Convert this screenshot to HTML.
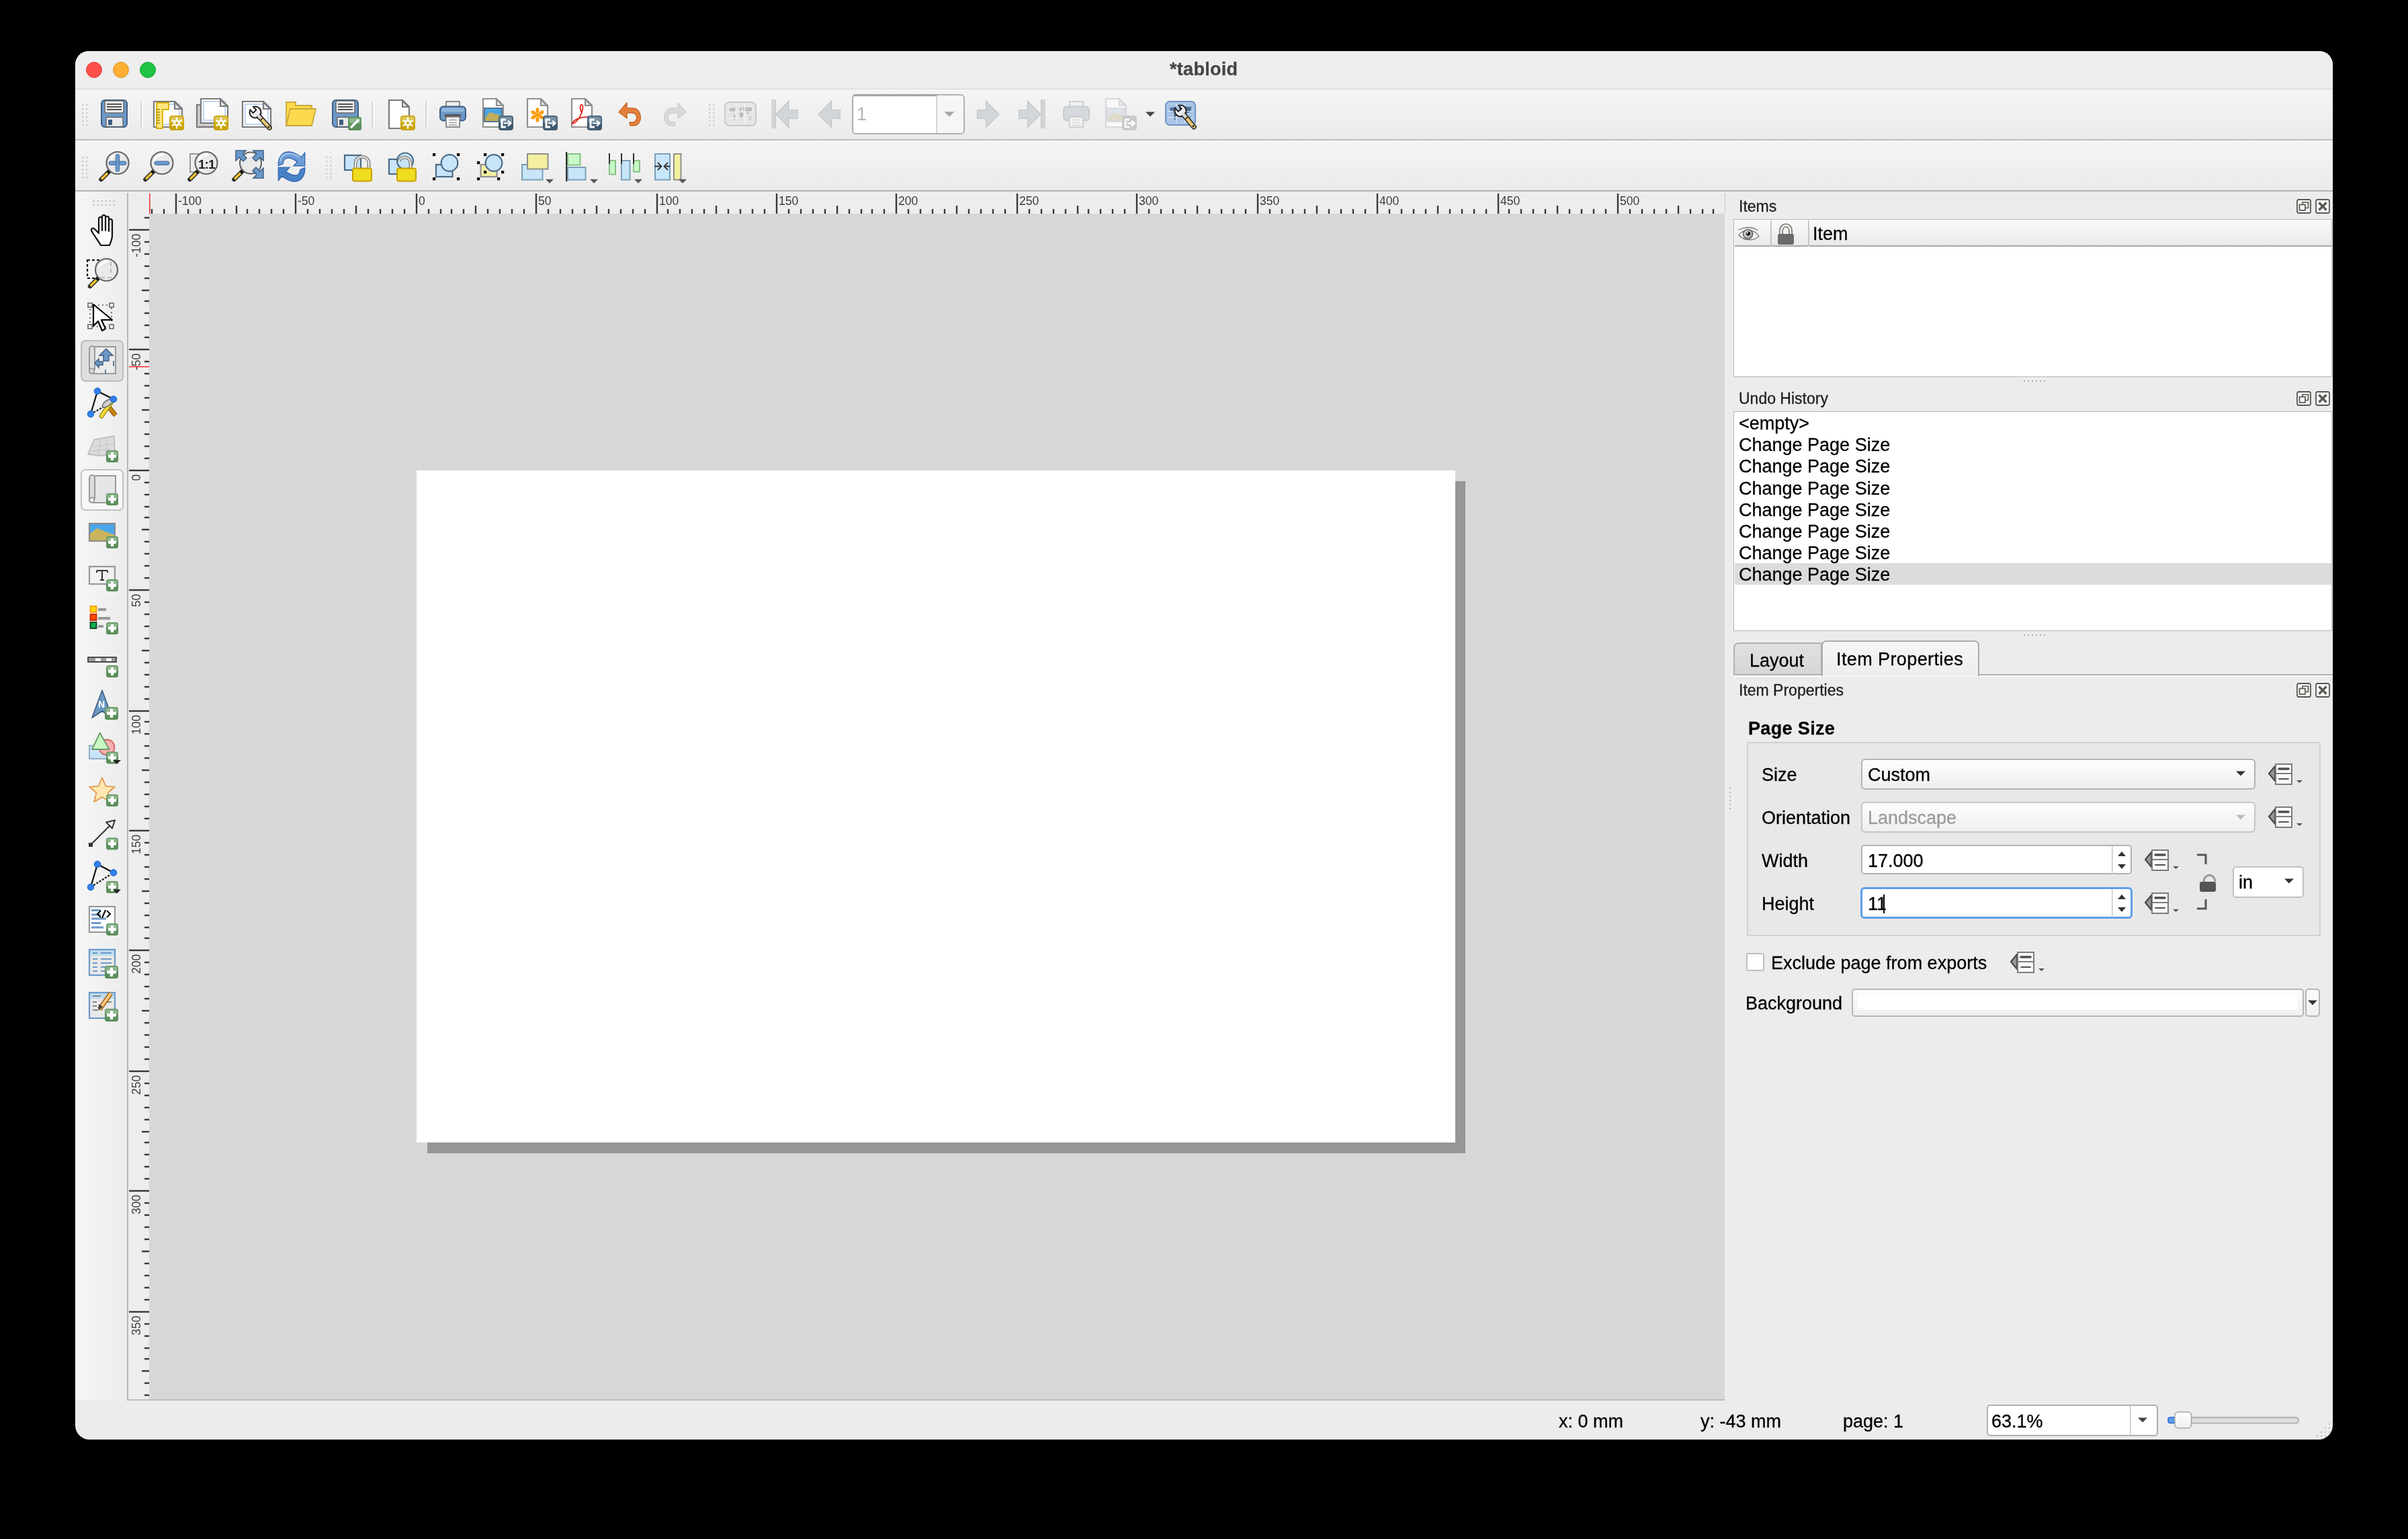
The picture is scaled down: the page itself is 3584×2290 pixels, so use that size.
<!DOCTYPE html>
<html><head><meta charset="utf-8">
<style>
*{margin:0;padding:0;box-sizing:border-box}
html,body{width:3584px;height:2290px;background:#000;overflow:hidden;font-family:"Liberation Sans",sans-serif;color:#000;-webkit-font-smoothing:antialiased}
.abs{}
.abs{position:absolute;white-space:nowrap;-webkit-text-stroke:0.3px currentColor}
svg text{font-family:"Liberation Sans",sans-serif}
</style></head><body><div id="root" style="position:absolute;left:0;top:0;width:3584px;height:2290px;will-change:transform">
<div class="abs" style="left:112px;top:76px;width:3360px;height:2066px;border-radius:21px;background:#ececec"></div>
<div class="abs" style="left:112px;top:76px;width:3360px;height:56px;background:#eeeeee;border-radius:20px 20px 0 0"></div>
<div class="abs" style="left:128px;top:92px;width:24px;height:24px;border-radius:50%;background:#fe4f4b;border:1px solid #e23f3a"></div>
<div class="abs" style="left:168px;top:92px;width:24px;height:24px;border-radius:50%;background:#feae32;border:1px solid #dd9428"></div>
<div class="abs" style="left:208px;top:92px;width:24px;height:24px;border-radius:50%;background:#1fc444;border:1px solid #18a737"></div>
<div class="abs" style="left:1741px;top:90px;font-size:27px;line-height:27px;color:#454545;font-weight:bold;letter-spacing:0.3px">*tabloid</div>
<div class="abs" style="left:112px;top:132px;width:3360px;height:1px;background:#d4d4d4"></div>
<div class="abs" style="left:112px;top:133px;width:3360px;height:74px;background:linear-gradient(#f5f5f5,#ebebeb)"></div>
<div class="abs" style="left:112px;top:207px;width:3360px;height:2px;background:#bebebe"></div>
<div class="abs" style="left:112px;top:209px;width:3360px;height:74px;background:linear-gradient(#f5f5f5,#ebebeb)"></div>
<div class="abs" style="left:112px;top:283px;width:3360px;height:2px;background:#b2b2b2"></div>
<div class="abs" style="left:112px;top:285px;width:78px;height:1799px;background:linear-gradient(90deg,#f6f6f6,#ececec)"></div>
<div class="abs" style="left:189px;top:287px;width:2px;height:1797px;background:#b8b8b8"></div>
<div class="abs" style="left:191px;top:285px;width:2377px;height:33px;background:#ededed"></div>
<div class="abs" style="left:191px;top:318px;width:31px;height:1764px;background:#ededed"></div>
<svg class="abs" style="left:190px;top:284px" width="2378" height="34"><rect x="34.80" y="27" width="2.4" height="7" fill="#383838"/><rect x="52.80" y="27" width="2.4" height="7" fill="#383838"/><rect x="70.80" y="4" width="2.4" height="30" fill="#383838"/><text x="75.0" y="21" font-size="17.5" fill="#3c3c3c">-100</text><rect x="88.80" y="27" width="2.4" height="7" fill="#383838"/><rect x="106.80" y="27" width="2.4" height="7" fill="#383838"/><rect x="124.80" y="27" width="2.4" height="7" fill="#383838"/><rect x="142.80" y="27" width="2.4" height="7" fill="#383838"/><rect x="160.80" y="22" width="2.4" height="12" fill="#383838"/><rect x="176.80" y="27" width="2.4" height="7" fill="#383838"/><rect x="194.80" y="27" width="2.4" height="7" fill="#383838"/><rect x="212.80" y="27" width="2.4" height="7" fill="#383838"/><rect x="230.80" y="27" width="2.4" height="7" fill="#383838"/><rect x="248.80" y="4" width="2.4" height="30" fill="#383838"/><text x="253.0" y="21" font-size="17.5" fill="#3c3c3c">-50</text><rect x="266.80" y="27" width="2.4" height="7" fill="#383838"/><rect x="284.80" y="27" width="2.4" height="7" fill="#383838"/><rect x="302.80" y="27" width="2.4" height="7" fill="#383838"/><rect x="320.80" y="27" width="2.4" height="7" fill="#383838"/><rect x="338.80" y="22" width="2.4" height="12" fill="#383838"/><rect x="356.80" y="27" width="2.4" height="7" fill="#383838"/><rect x="374.80" y="27" width="2.4" height="7" fill="#383838"/><rect x="392.80" y="27" width="2.4" height="7" fill="#383838"/><rect x="410.80" y="27" width="2.4" height="7" fill="#383838"/><rect x="428.80" y="4" width="2.4" height="30" fill="#383838"/><text x="433.0" y="21" font-size="17.5" fill="#3c3c3c">0</text><rect x="446.80" y="27" width="2.4" height="7" fill="#383838"/><rect x="464.80" y="27" width="2.4" height="7" fill="#383838"/><rect x="480.80" y="27" width="2.4" height="7" fill="#383838"/><rect x="498.80" y="27" width="2.4" height="7" fill="#383838"/><rect x="516.80" y="22" width="2.4" height="12" fill="#383838"/><rect x="534.80" y="27" width="2.4" height="7" fill="#383838"/><rect x="552.80" y="27" width="2.4" height="7" fill="#383838"/><rect x="570.80" y="27" width="2.4" height="7" fill="#383838"/><rect x="588.80" y="27" width="2.4" height="7" fill="#383838"/><rect x="606.80" y="4" width="2.4" height="30" fill="#383838"/><text x="611.0" y="21" font-size="17.5" fill="#3c3c3c">50</text><rect x="624.80" y="27" width="2.4" height="7" fill="#383838"/><rect x="642.80" y="27" width="2.4" height="7" fill="#383838"/><rect x="660.80" y="27" width="2.4" height="7" fill="#383838"/><rect x="678.80" y="27" width="2.4" height="7" fill="#383838"/><rect x="696.80" y="22" width="2.4" height="12" fill="#383838"/><rect x="714.80" y="27" width="2.4" height="7" fill="#383838"/><rect x="732.80" y="27" width="2.4" height="7" fill="#383838"/><rect x="750.80" y="27" width="2.4" height="7" fill="#383838"/><rect x="768.80" y="27" width="2.4" height="7" fill="#383838"/><rect x="786.80" y="4" width="2.4" height="30" fill="#383838"/><text x="791.0" y="21" font-size="17.5" fill="#3c3c3c">100</text><rect x="802.80" y="27" width="2.4" height="7" fill="#383838"/><rect x="820.80" y="27" width="2.4" height="7" fill="#383838"/><rect x="838.80" y="27" width="2.4" height="7" fill="#383838"/><rect x="856.80" y="27" width="2.4" height="7" fill="#383838"/><rect x="874.80" y="22" width="2.4" height="12" fill="#383838"/><rect x="892.80" y="27" width="2.4" height="7" fill="#383838"/><rect x="910.80" y="27" width="2.4" height="7" fill="#383838"/><rect x="928.80" y="27" width="2.4" height="7" fill="#383838"/><rect x="946.80" y="27" width="2.4" height="7" fill="#383838"/><rect x="964.80" y="4" width="2.4" height="30" fill="#383838"/><text x="969.0" y="21" font-size="17.5" fill="#3c3c3c">150</text><rect x="982.80" y="27" width="2.4" height="7" fill="#383838"/><rect x="1000.80" y="27" width="2.4" height="7" fill="#383838"/><rect x="1018.80" y="27" width="2.4" height="7" fill="#383838"/><rect x="1036.80" y="27" width="2.4" height="7" fill="#383838"/><rect x="1054.80" y="22" width="2.4" height="12" fill="#383838"/><rect x="1072.80" y="27" width="2.4" height="7" fill="#383838"/><rect x="1090.80" y="27" width="2.4" height="7" fill="#383838"/><rect x="1106.80" y="27" width="2.4" height="7" fill="#383838"/><rect x="1124.80" y="27" width="2.4" height="7" fill="#383838"/><rect x="1142.80" y="4" width="2.4" height="30" fill="#383838"/><text x="1147.0" y="21" font-size="17.5" fill="#3c3c3c">200</text><rect x="1160.80" y="27" width="2.4" height="7" fill="#383838"/><rect x="1178.80" y="27" width="2.4" height="7" fill="#383838"/><rect x="1196.80" y="27" width="2.4" height="7" fill="#383838"/><rect x="1214.80" y="27" width="2.4" height="7" fill="#383838"/><rect x="1232.80" y="22" width="2.4" height="12" fill="#383838"/><rect x="1250.80" y="27" width="2.4" height="7" fill="#383838"/><rect x="1268.80" y="27" width="2.4" height="7" fill="#383838"/><rect x="1286.80" y="27" width="2.4" height="7" fill="#383838"/><rect x="1304.80" y="27" width="2.4" height="7" fill="#383838"/><rect x="1322.80" y="4" width="2.4" height="30" fill="#383838"/><text x="1327.0" y="21" font-size="17.5" fill="#3c3c3c">250</text><rect x="1340.80" y="27" width="2.4" height="7" fill="#383838"/><rect x="1358.80" y="27" width="2.4" height="7" fill="#383838"/><rect x="1376.80" y="27" width="2.4" height="7" fill="#383838"/><rect x="1394.80" y="27" width="2.4" height="7" fill="#383838"/><rect x="1412.80" y="22" width="2.4" height="12" fill="#383838"/><rect x="1428.80" y="27" width="2.4" height="7" fill="#383838"/><rect x="1446.80" y="27" width="2.4" height="7" fill="#383838"/><rect x="1464.80" y="27" width="2.4" height="7" fill="#383838"/><rect x="1482.80" y="27" width="2.4" height="7" fill="#383838"/><rect x="1500.80" y="4" width="2.4" height="30" fill="#383838"/><text x="1505.0" y="21" font-size="17.5" fill="#3c3c3c">300</text><rect x="1518.80" y="27" width="2.4" height="7" fill="#383838"/><rect x="1536.80" y="27" width="2.4" height="7" fill="#383838"/><rect x="1554.80" y="27" width="2.4" height="7" fill="#383838"/><rect x="1572.80" y="27" width="2.4" height="7" fill="#383838"/><rect x="1590.80" y="22" width="2.4" height="12" fill="#383838"/><rect x="1608.80" y="27" width="2.4" height="7" fill="#383838"/><rect x="1626.80" y="27" width="2.4" height="7" fill="#383838"/><rect x="1644.80" y="27" width="2.4" height="7" fill="#383838"/><rect x="1662.80" y="27" width="2.4" height="7" fill="#383838"/><rect x="1680.80" y="4" width="2.4" height="30" fill="#383838"/><text x="1685.0" y="21" font-size="17.5" fill="#3c3c3c">350</text><rect x="1698.80" y="27" width="2.4" height="7" fill="#383838"/><rect x="1716.80" y="27" width="2.4" height="7" fill="#383838"/><rect x="1732.80" y="27" width="2.4" height="7" fill="#383838"/><rect x="1750.80" y="27" width="2.4" height="7" fill="#383838"/><rect x="1768.80" y="22" width="2.4" height="12" fill="#383838"/><rect x="1786.80" y="27" width="2.4" height="7" fill="#383838"/><rect x="1804.80" y="27" width="2.4" height="7" fill="#383838"/><rect x="1822.80" y="27" width="2.4" height="7" fill="#383838"/><rect x="1840.80" y="27" width="2.4" height="7" fill="#383838"/><rect x="1858.80" y="4" width="2.4" height="30" fill="#383838"/><text x="1863.0" y="21" font-size="17.5" fill="#3c3c3c">400</text><rect x="1876.80" y="27" width="2.4" height="7" fill="#383838"/><rect x="1894.80" y="27" width="2.4" height="7" fill="#383838"/><rect x="1912.80" y="27" width="2.4" height="7" fill="#383838"/><rect x="1930.80" y="27" width="2.4" height="7" fill="#383838"/><rect x="1948.80" y="22" width="2.4" height="12" fill="#383838"/><rect x="1966.80" y="27" width="2.4" height="7" fill="#383838"/><rect x="1984.80" y="27" width="2.4" height="7" fill="#383838"/><rect x="2002.80" y="27" width="2.4" height="7" fill="#383838"/><rect x="2020.80" y="27" width="2.4" height="7" fill="#383838"/><rect x="2038.80" y="4" width="2.4" height="30" fill="#383838"/><text x="2043.0" y="21" font-size="17.5" fill="#3c3c3c">450</text><rect x="2054.80" y="27" width="2.4" height="7" fill="#383838"/><rect x="2072.80" y="27" width="2.4" height="7" fill="#383838"/><rect x="2090.80" y="27" width="2.4" height="7" fill="#383838"/><rect x="2108.80" y="27" width="2.4" height="7" fill="#383838"/><rect x="2126.80" y="22" width="2.4" height="12" fill="#383838"/><rect x="2144.80" y="27" width="2.4" height="7" fill="#383838"/><rect x="2162.80" y="27" width="2.4" height="7" fill="#383838"/><rect x="2180.80" y="27" width="2.4" height="7" fill="#383838"/><rect x="2198.80" y="27" width="2.4" height="7" fill="#383838"/><rect x="2216.80" y="4" width="2.4" height="30" fill="#383838"/><text x="2221.0" y="21" font-size="17.5" fill="#3c3c3c">500</text><rect x="2234.80" y="27" width="2.4" height="7" fill="#383838"/><rect x="2252.80" y="27" width="2.4" height="7" fill="#383838"/><rect x="2270.80" y="27" width="2.4" height="7" fill="#383838"/><rect x="2288.80" y="27" width="2.4" height="7" fill="#383838"/><rect x="2306.80" y="22" width="2.4" height="12" fill="#383838"/><rect x="2324.80" y="27" width="2.4" height="7" fill="#383838"/><rect x="2342.80" y="27" width="2.4" height="7" fill="#383838"/><rect x="2358.80" y="27" width="2.4" height="7" fill="#383838"/><rect x="32.19999999999999" y="4" width="1.3" height="30" fill="#ff1010"/></svg>
<svg class="abs" style="left:190px;top:318px" width="32" height="1764"><rect x="25" y="4.80" width="7" height="2.4" fill="#383838"/><rect x="2" y="22.80" width="30" height="2.4" fill="#383838"/><text transform="translate(19.3 29.7) rotate(-90)" text-anchor="end" font-size="17.5" fill="#3c3c3c">-100</text><rect x="25" y="40.80" width="7" height="2.4" fill="#383838"/><rect x="25" y="58.80" width="7" height="2.4" fill="#383838"/><rect x="25" y="76.80" width="7" height="2.4" fill="#383838"/><rect x="25" y="94.80" width="7" height="2.4" fill="#383838"/><rect x="21" y="112.80" width="11" height="2.4" fill="#383838"/><rect x="25" y="128.80" width="7" height="2.4" fill="#383838"/><rect x="25" y="146.80" width="7" height="2.4" fill="#383838"/><rect x="25" y="164.80" width="7" height="2.4" fill="#383838"/><rect x="25" y="182.80" width="7" height="2.4" fill="#383838"/><rect x="2" y="200.80" width="30" height="2.4" fill="#383838"/><text transform="translate(19.3 207.7) rotate(-90)" text-anchor="end" font-size="17.5" fill="#3c3c3c">-50</text><rect x="25" y="218.80" width="7" height="2.4" fill="#383838"/><rect x="25" y="236.80" width="7" height="2.4" fill="#383838"/><rect x="25" y="254.80" width="7" height="2.4" fill="#383838"/><rect x="25" y="272.80" width="7" height="2.4" fill="#383838"/><rect x="21" y="290.80" width="11" height="2.4" fill="#383838"/><rect x="25" y="308.80" width="7" height="2.4" fill="#383838"/><rect x="25" y="326.80" width="7" height="2.4" fill="#383838"/><rect x="25" y="344.80" width="7" height="2.4" fill="#383838"/><rect x="25" y="362.80" width="7" height="2.4" fill="#383838"/><rect x="2" y="380.80" width="30" height="2.4" fill="#383838"/><text transform="translate(19.3 387.7) rotate(-90)" text-anchor="end" font-size="17.5" fill="#3c3c3c">0</text><rect x="25" y="398.80" width="7" height="2.4" fill="#383838"/><rect x="25" y="416.80" width="7" height="2.4" fill="#383838"/><rect x="25" y="434.80" width="7" height="2.4" fill="#383838"/><rect x="25" y="450.80" width="7" height="2.4" fill="#383838"/><rect x="21" y="468.80" width="11" height="2.4" fill="#383838"/><rect x="25" y="486.80" width="7" height="2.4" fill="#383838"/><rect x="25" y="504.80" width="7" height="2.4" fill="#383838"/><rect x="25" y="522.80" width="7" height="2.4" fill="#383838"/><rect x="25" y="540.80" width="7" height="2.4" fill="#383838"/><rect x="2" y="558.80" width="30" height="2.4" fill="#383838"/><text transform="translate(19.3 565.7) rotate(-90)" text-anchor="end" font-size="17.5" fill="#3c3c3c">50</text><rect x="25" y="576.80" width="7" height="2.4" fill="#383838"/><rect x="25" y="594.80" width="7" height="2.4" fill="#383838"/><rect x="25" y="612.80" width="7" height="2.4" fill="#383838"/><rect x="25" y="630.80" width="7" height="2.4" fill="#383838"/><rect x="21" y="648.80" width="11" height="2.4" fill="#383838"/><rect x="25" y="666.80" width="7" height="2.4" fill="#383838"/><rect x="25" y="684.80" width="7" height="2.4" fill="#383838"/><rect x="25" y="702.80" width="7" height="2.4" fill="#383838"/><rect x="25" y="720.80" width="7" height="2.4" fill="#383838"/><rect x="2" y="738.80" width="30" height="2.4" fill="#383838"/><text transform="translate(19.3 745.7) rotate(-90)" text-anchor="end" font-size="17.5" fill="#3c3c3c">100</text><rect x="25" y="754.80" width="7" height="2.4" fill="#383838"/><rect x="25" y="772.80" width="7" height="2.4" fill="#383838"/><rect x="25" y="790.80" width="7" height="2.4" fill="#383838"/><rect x="25" y="808.80" width="7" height="2.4" fill="#383838"/><rect x="21" y="826.80" width="11" height="2.4" fill="#383838"/><rect x="25" y="844.80" width="7" height="2.4" fill="#383838"/><rect x="25" y="862.80" width="7" height="2.4" fill="#383838"/><rect x="25" y="880.80" width="7" height="2.4" fill="#383838"/><rect x="25" y="898.80" width="7" height="2.4" fill="#383838"/><rect x="2" y="916.80" width="30" height="2.4" fill="#383838"/><text transform="translate(19.3 923.7) rotate(-90)" text-anchor="end" font-size="17.5" fill="#3c3c3c">150</text><rect x="25" y="934.80" width="7" height="2.4" fill="#383838"/><rect x="25" y="952.80" width="7" height="2.4" fill="#383838"/><rect x="25" y="970.80" width="7" height="2.4" fill="#383838"/><rect x="25" y="988.80" width="7" height="2.4" fill="#383838"/><rect x="21" y="1006.80" width="11" height="2.4" fill="#383838"/><rect x="25" y="1024.80" width="7" height="2.4" fill="#383838"/><rect x="25" y="1042.80" width="7" height="2.4" fill="#383838"/><rect x="25" y="1060.80" width="7" height="2.4" fill="#383838"/><rect x="25" y="1076.80" width="7" height="2.4" fill="#383838"/><rect x="2" y="1094.80" width="30" height="2.4" fill="#383838"/><text transform="translate(19.3 1101.7) rotate(-90)" text-anchor="end" font-size="17.5" fill="#3c3c3c">200</text><rect x="25" y="1112.80" width="7" height="2.4" fill="#383838"/><rect x="25" y="1130.80" width="7" height="2.4" fill="#383838"/><rect x="25" y="1148.80" width="7" height="2.4" fill="#383838"/><rect x="25" y="1166.80" width="7" height="2.4" fill="#383838"/><rect x="21" y="1184.80" width="11" height="2.4" fill="#383838"/><rect x="25" y="1202.80" width="7" height="2.4" fill="#383838"/><rect x="25" y="1220.80" width="7" height="2.4" fill="#383838"/><rect x="25" y="1238.80" width="7" height="2.4" fill="#383838"/><rect x="25" y="1256.80" width="7" height="2.4" fill="#383838"/><rect x="2" y="1274.80" width="30" height="2.4" fill="#383838"/><text transform="translate(19.3 1281.7) rotate(-90)" text-anchor="end" font-size="17.5" fill="#3c3c3c">250</text><rect x="25" y="1292.80" width="7" height="2.4" fill="#383838"/><rect x="25" y="1310.80" width="7" height="2.4" fill="#383838"/><rect x="25" y="1328.80" width="7" height="2.4" fill="#383838"/><rect x="25" y="1346.80" width="7" height="2.4" fill="#383838"/><rect x="21" y="1364.80" width="11" height="2.4" fill="#383838"/><rect x="25" y="1380.80" width="7" height="2.4" fill="#383838"/><rect x="25" y="1398.80" width="7" height="2.4" fill="#383838"/><rect x="25" y="1416.80" width="7" height="2.4" fill="#383838"/><rect x="25" y="1434.80" width="7" height="2.4" fill="#383838"/><rect x="2" y="1452.80" width="30" height="2.4" fill="#383838"/><text transform="translate(19.3 1459.7) rotate(-90)" text-anchor="end" font-size="17.5" fill="#3c3c3c">300</text><rect x="25" y="1470.80" width="7" height="2.4" fill="#383838"/><rect x="25" y="1488.80" width="7" height="2.4" fill="#383838"/><rect x="25" y="1506.80" width="7" height="2.4" fill="#383838"/><rect x="25" y="1524.80" width="7" height="2.4" fill="#383838"/><rect x="21" y="1542.80" width="11" height="2.4" fill="#383838"/><rect x="25" y="1560.80" width="7" height="2.4" fill="#383838"/><rect x="25" y="1578.80" width="7" height="2.4" fill="#383838"/><rect x="25" y="1596.80" width="7" height="2.4" fill="#383838"/><rect x="25" y="1614.80" width="7" height="2.4" fill="#383838"/><rect x="2" y="1632.80" width="30" height="2.4" fill="#383838"/><text transform="translate(19.3 1639.7) rotate(-90)" text-anchor="end" font-size="17.5" fill="#3c3c3c">350</text><rect x="25" y="1650.80" width="7" height="2.4" fill="#383838"/><rect x="25" y="1668.80" width="7" height="2.4" fill="#383838"/><rect x="25" y="1686.80" width="7" height="2.4" fill="#383838"/><rect x="25" y="1702.80" width="7" height="2.4" fill="#383838"/><rect x="21" y="1720.80" width="11" height="2.4" fill="#383838"/><rect x="25" y="1738.80" width="7" height="2.4" fill="#383838"/><rect x="25" y="1756.80" width="7" height="2.4" fill="#383838"/><rect x="2" y="227.00000000000003" width="30" height="1.3" fill="#ff1010"/></svg>
<div class="abs" style="left:222px;top:318px;width:2345px;height:1764px;background:#d7d7d7"></div>
<div class="abs" style="left:191px;top:2082px;width:2377px;height:2px;background:#bdbdbd"></div>
<div class="abs" style="left:2567px;top:287px;width:1px;height:31px;background:#c8c8c8"></div>
<div class="abs" style="left:636px;top:716px;width:1545px;height:1000px;background:#969696"></div>
<div class="abs" style="left:620px;top:700px;width:1546px;height:1000px;background:#fff"></div>

<div class="abs" style="left:2588px;top:296px;font-size:23px;line-height:23px;color:#1e1e1e;">Items</div>
<div class="abs" style="left:2580px;top:326px;width:891px;height:235px;background:#fff;border:1.5px solid #b6b6b6"></div>
<div class="abs" style="left:2581.5px;top:327.5px;width:888px;height:39.5px;background:linear-gradient(#fafafa,#e9e9e9);border-bottom:2px solid #a6a6a6"></div>
<div class="abs" style="left:2635px;top:328px;width:2px;height:39px;background:#c6c6c6"></div>
<div class="abs" style="left:2691px;top:328px;width:2px;height:39px;background:#c6c6c6"></div>
<div class="abs" style="left:2698px;top:335px;font-size:27px;line-height:27px;">Item</div>

<div class="abs" style="left:2588px;top:582px;font-size:23px;line-height:23px;color:#1e1e1e;">Undo History</div>
<div class="abs" style="left:2580px;top:612px;width:891px;height:327px;background:#fff;border:1.5px solid #b6b6b6"></div>
<div class="abs" style="left:2581.5px;top:838px;width:888px;height:32px;background:#dcdcdc"></div>
<div class="abs" style="left:2588px;top:617.0px;font-size:27px;line-height:27px;">&lt;empty&gt;</div><div class="abs" style="left:2588px;top:649.2px;font-size:27px;line-height:27px;">Change Page Size</div><div class="abs" style="left:2588px;top:681.4px;font-size:27px;line-height:27px;">Change Page Size</div><div class="abs" style="left:2588px;top:713.6px;font-size:27px;line-height:27px;">Change Page Size</div><div class="abs" style="left:2588px;top:745.8px;font-size:27px;line-height:27px;">Change Page Size</div><div class="abs" style="left:2588px;top:778.0px;font-size:27px;line-height:27px;">Change Page Size</div><div class="abs" style="left:2588px;top:810.2px;font-size:27px;line-height:27px;">Change Page Size</div><div class="abs" style="left:2588px;top:842.4000000000001px;font-size:27px;line-height:27px;">Change Page Size</div>

<div class="abs" style="left:2580px;top:1005px;width:892px;height:2px;background:#fdfdfd"></div>
<div class="abs" style="left:2580px;top:956px;width:132px;height:49px;background:linear-gradient(#e0e0e0,#d6d6d6);border:2px solid #b0b0b0;border-bottom:none;border-radius:8px 0 0 0"></div>
<div class="abs" style="left:2580px;top:1003px;width:892px;height:2px;background:#b0b0b0"></div>
<div class="abs" style="left:2711px;top:952.5px;width:235px;height:53.5px;background:linear-gradient(#f6f6f6,#ededed);border:2px solid #acacac;border-bottom:none;border-radius:7px 7px 0 0"></div>
<div class="abs" style="left:2604px;top:970px;font-size:27px;line-height:27px;">Layout</div>
<div class="abs" style="left:2733px;top:968px;font-size:27px;line-height:27px;letter-spacing:0.4px">Item Properties</div>
<div class="abs" style="left:2588px;top:1016px;font-size:23px;line-height:23px;color:#1e1e1e;">Item Properties</div>
<div class="abs" style="left:2602px;top:1071px;font-size:27px;line-height:27px;font-weight:bold;letter-spacing:0.35px">Page Size</div>
<div class="abs" style="left:2600px;top:1104px;width:854px;height:289px;background:#e8e8e8;border:2px solid #d0d0d0;border-radius:2px"></div>
<div class="abs" style="left:2622px;top:1140px;font-size:27px;line-height:27px;">Size</div>
<div class="abs" style="left:2622px;top:1204px;font-size:27px;line-height:27px;">Orientation</div>
<div class="abs" style="left:2622px;top:1268px;font-size:27px;line-height:27px;">Width</div>
<div class="abs" style="left:2622px;top:1332px;font-size:27px;line-height:27px;">Height</div>
<div class="abs" style="left:2770px;top:1129px;width:587px;height:46px;background:linear-gradient(#fdfdfd,#efefef);border:2px solid #b2b2b2;border-radius:6px"></div>
<div class="abs" style="left:2780px;top:1140px;font-size:27px;line-height:27px;">Custom</div>
<div class="abs" style="left:2770px;top:1193px;width:587px;height:46px;background:linear-gradient(#fdfdfd,#efefef);border:2px solid #c6c6c6;border-radius:6px"></div>
<div class="abs" style="left:2780px;top:1204px;font-size:27px;line-height:27px;color:#9c9c9c;">Landscape</div>
<div class="abs" style="left:2770px;top:1257px;width:403px;height:44px;background:#fff;border:2px solid #b2b2b2;border-radius:5px"></div>
<div class="abs" style="left:2780px;top:1268px;font-size:27px;line-height:27px;">17.000</div>
<div class="abs" style="left:2769px;top:1320px;width:405px;height:47px;background:#fff;border:3px solid #5d9fe9;border-radius:6px"></div>
<div class="abs" style="left:2780px;top:1332px;font-size:27px;line-height:27px;">11</div>
<div class="abs" style="left:2803px;top:1331px;width:2px;height:28px;background:#000"></div>
<div class="abs" style="left:3323px;top:1289px;width:106px;height:47px;background:#fff;border:2px solid #c2c2c2;border-radius:5px"></div>
<div class="abs" style="left:3332px;top:1300px;font-size:27px;line-height:27px;">in</div>

<div class="abs" style="left:2599px;top:1418px;width:27px;height:27px;background:#fff;border:2px solid #bebebe;border-radius:3px"></div>
<div class="abs" style="left:2636px;top:1420px;font-size:27px;line-height:27px;">Exclude page from exports</div>
<div class="abs" style="left:2598px;top:1480px;font-size:27px;line-height:27px;">Background</div>
<div class="abs" style="left:2756px;top:1471px;width:673px;height:42px;background:linear-gradient(#fdfdfd,#efefef);border:2px solid #b6b6b6;border-radius:5px"></div>
<div class="abs" style="left:2765px;top:1482px;width:655px;height:20px;background:#fff"></div>
<div class="abs" style="left:3431px;top:1471px;width:22px;height:42px;background:linear-gradient(#fdfdfd,#efefef);border:2px solid #b6b6b6;border-radius:5px"></div>

<div class="abs" style="left:2320px;top:2102px;font-size:27px;line-height:27px;">x: 0 mm</div>
<div class="abs" style="left:2531px;top:2102px;font-size:27px;line-height:27px;">y: -43 mm</div>
<div class="abs" style="left:2743px;top:2102px;font-size:27px;line-height:27px;">page: 1</div>
<div class="abs" style="left:2957px;top:2090px;width:255px;height:47px;background:#fff;border:2px solid #b0b0b0;border-radius:5px"></div>
<div class="abs" style="left:2964px;top:2102px;font-size:27px;line-height:27px;">63.1%</div>

<svg class="abs" style="left:0;top:0" width="3584" height="2290">
<rect x="122" y="155" width="2.4" height="2.4" fill="#cdcdcd"/><rect x="128" y="155" width="2.4" height="2.4" fill="#cdcdcd"/><rect x="122" y="161" width="2.4" height="2.4" fill="#cdcdcd"/><rect x="128" y="161" width="2.4" height="2.4" fill="#cdcdcd"/><rect x="122" y="167" width="2.4" height="2.4" fill="#cdcdcd"/><rect x="128" y="167" width="2.4" height="2.4" fill="#cdcdcd"/><rect x="122" y="173" width="2.4" height="2.4" fill="#cdcdcd"/><rect x="128" y="173" width="2.4" height="2.4" fill="#cdcdcd"/><rect x="122" y="179" width="2.4" height="2.4" fill="#cdcdcd"/><rect x="128" y="179" width="2.4" height="2.4" fill="#cdcdcd"/><rect x="122" y="185" width="2.4" height="2.4" fill="#cdcdcd"/><rect x="128" y="185" width="2.4" height="2.4" fill="#cdcdcd"/><rect x="151" y="149" width="38" height="40" rx="5" fill="#6c99c9" stroke="#3f5f82" stroke-width="2"/><rect x="156" y="150" width="28" height="18" rx="2" fill="#eeeeee" stroke="#6a6a6a" stroke-width="1.5"/><path d="M159,155 H181 M159,159 H181 M159,163 H181" stroke="#555" stroke-width="1.8"/><rect x="158" y="174.5" width="25" height="14" fill="#ececec" stroke="#6a6a6a" stroke-width="1.5"/><rect x="161" y="178" width="6" height="8" fill="#3f5f82"/><rect x="209.5" y="151" width="2" height="38" fill="#d0d0d0"/><rect x="211.5" y="151" width="1.5" height="38" fill="#fff"/><path d="M229,151 H260 L271,162 V189 H229 Z" fill="#fff" stroke="#7a7a7a" stroke-width="2.2" stroke-linejoin="miter"/><rect x="233" y="155" width="34" height="30" fill="none" stroke="#c3d5f3" stroke-width="2"/><path d="M260,151 L271,162" stroke="#7a7a7a" stroke-width="2.2"/><path d="M260,152 V162 H270 Z" fill="#e8e8e8" stroke="#7a7a7a" stroke-width="2.2" stroke-linejoin="miter"/><path d="M233,153 H251 V163 H242 V191 H233 Z" fill="#fde47e" stroke="#d8b000" stroke-width="1.8"/><line x1="233" y1="163" x2="238" y2="163" stroke="#a88a00" stroke-width="1.6"/><line x1="233" y1="167" x2="238" y2="167" stroke="#a88a00" stroke-width="1.6"/><line x1="233" y1="171" x2="238" y2="171" stroke="#a88a00" stroke-width="1.6"/><line x1="233" y1="175" x2="238" y2="175" stroke="#a88a00" stroke-width="1.6"/><line x1="233" y1="179" x2="238" y2="179" stroke="#a88a00" stroke-width="1.6"/><line x1="233" y1="183" x2="238" y2="183" stroke="#a88a00" stroke-width="1.6"/><rect x="252" y="172" width="22" height="22" rx="4" fill="#c9a400"/><rect x="253.5" y="173.5" width="19" height="9.9" rx="3" fill="#dcc458"/><line x1="263.0" y1="183.0" x2="263.00" y2="174.50" stroke="#fff" stroke-width="2.4"/><line x1="263.0" y1="183.0" x2="255.64" y2="178.75" stroke="#fff" stroke-width="2.4"/><line x1="263.0" y1="183.0" x2="255.64" y2="187.25" stroke="#fff" stroke-width="2.4"/><line x1="263.0" y1="183.0" x2="263.00" y2="191.50" stroke="#fff" stroke-width="2.4"/><line x1="263.0" y1="183.0" x2="270.36" y2="187.25" stroke="#fff" stroke-width="2.4"/><line x1="263.0" y1="183.0" x2="270.36" y2="178.75" stroke="#fff" stroke-width="2.4"/><circle cx="263.0" cy="183.0" r="4.6" fill="#fff"/><circle cx="263.0" cy="183.0" r="2" fill="#c9a400"/><rect x="293" y="156" width="28" height="33" fill="#cccccc" stroke="#7a7a7a" stroke-width="2.2"/><path d="M299,147 H328 L339,158 V183 H299 Z" fill="#fff" stroke="#7a7a7a" stroke-width="2.2" stroke-linejoin="miter"/><rect x="303" y="151" width="32" height="28" fill="none" stroke="#c3d5f3" stroke-width="2"/><path d="M328,147 L339,158" stroke="#7a7a7a" stroke-width="2.2"/><path d="M328,148 V158 H338 Z" fill="#e8e8e8" stroke="#7a7a7a" stroke-width="2.2" stroke-linejoin="miter"/><rect x="318" y="172" width="22" height="22" rx="4" fill="#c9a400"/><rect x="319.5" y="173.5" width="19" height="9.9" rx="3" fill="#dcc458"/><line x1="329.0" y1="183.0" x2="329.00" y2="174.50" stroke="#fff" stroke-width="2.4"/><line x1="329.0" y1="183.0" x2="321.64" y2="178.75" stroke="#fff" stroke-width="2.4"/><line x1="329.0" y1="183.0" x2="321.64" y2="187.25" stroke="#fff" stroke-width="2.4"/><line x1="329.0" y1="183.0" x2="329.00" y2="191.50" stroke="#fff" stroke-width="2.4"/><line x1="329.0" y1="183.0" x2="336.36" y2="187.25" stroke="#fff" stroke-width="2.4"/><line x1="329.0" y1="183.0" x2="336.36" y2="178.75" stroke="#fff" stroke-width="2.4"/><circle cx="329.0" cy="183.0" r="4.6" fill="#fff"/><circle cx="329.0" cy="183.0" r="2" fill="#c9a400"/><path d="M361,151 H392 L403,162 V189 H361 Z" fill="#fff" stroke="#7a7a7a" stroke-width="2.2" stroke-linejoin="miter"/><rect x="365" y="155" width="34" height="30" fill="none" stroke="#c3d5f3" stroke-width="2"/><path d="M392,151 L403,162" stroke="#7a7a7a" stroke-width="2.2"/><path d="M392,152 V162 H402 Z" fill="#e8e8e8" stroke="#7a7a7a" stroke-width="2.2" stroke-linejoin="miter"/><g transform="translate(380 167) rotate(47.6)"><line x1="5" y1="0" x2="31.1" y2="0" stroke="#222" stroke-width="7.5" stroke-linecap="round"/><line x1="5" y1="0" x2="31.1" y2="0" stroke="#e6c872" stroke-width="4.6" stroke-linecap="round"/><line x1="14.0" y1="-2.3" x2="14.0" y2="2.3" stroke="#333" stroke-width="1.5"/><circle cx="29.6" cy="0" r="1.6" fill="#333"/><path d="M-7.87,3.2 L-1.5,3.2 L-1.5,-3.2 L-7.87,-3.2 A8.5,8.5 0 1 1 -7.87,3.2 Z" fill="#ececec" stroke="#222" stroke-width="2"/><line x1="6" y1="0" x2="12" y2="0" stroke="#222" stroke-width="7.5"/><line x1="5" y1="0" x2="12" y2="0" stroke="#d8d8d8" stroke-width="4.6"/></g><path d="M426,187 V152 H440 V157 H464 V187 Z" fill="#fdd94e" stroke="#c9a93a" stroke-width="1.8"/><path d="M426,187 L432,162 H470 L464,187 Z" fill="#fdd94e" stroke="#c9a93a" stroke-width="1.8"/><rect x="495" y="149" width="38" height="40" rx="5" fill="#6c99c9" stroke="#3f5f82" stroke-width="2"/><rect x="500" y="150" width="28" height="18" rx="2" fill="#eeeeee" stroke="#6a6a6a" stroke-width="1.5"/><path d="M503,155 H525 M503,159 H525 M503,163 H525" stroke="#555" stroke-width="1.8"/><rect x="502" y="174.5" width="25" height="14" fill="#ececec" stroke="#6a6a6a" stroke-width="1.5"/><rect x="505" y="178" width="6" height="8" fill="#3f5f82"/><rect x="518" y="174" width="20" height="20" rx="3.5" fill="#5b8f5b"/><rect x="519.2" y="175.2" width="17.6" height="8.4" rx="2.5" fill="#8db58d"/><rect x="525.8" y="177" width="4.4" height="14" rx="1" fill="#fff"/><rect x="521" y="181.8" width="14" height="4.4" rx="1" fill="#fff"/><rect x="518" y="174" width="20" height="20" rx="4" fill="#5b8f5b"/><rect x="519.5" y="175.5" width="17" height="8" rx="3" fill="#8db58d"/><line x1="523" y1="189" x2="533" y2="179" stroke="#fff" stroke-width="3.5" stroke-linecap="round"/><rect x="553.5" y="151" width="2" height="38" fill="#d0d0d0"/><rect x="555.5" y="151" width="1.5" height="38" fill="#fff"/><path d="M579,149 H599 L609,159 V191 H579 Z" fill="#fff" stroke="#7a7a7a" stroke-width="2.2" stroke-linejoin="miter"/><path d="M599,149 L609,159" stroke="#7a7a7a" stroke-width="2.2"/><path d="M599,150 V159 H608 Z" fill="#e8e8e8" stroke="#7a7a7a" stroke-width="2.2" stroke-linejoin="miter"/><rect x="596" y="172" width="22" height="22" rx="4" fill="#c9a400"/><rect x="597.5" y="173.5" width="19" height="9.9" rx="3" fill="#dcc458"/><line x1="607.0" y1="183.0" x2="607.00" y2="174.50" stroke="#fff" stroke-width="2.4"/><line x1="607.0" y1="183.0" x2="599.64" y2="178.75" stroke="#fff" stroke-width="2.4"/><line x1="607.0" y1="183.0" x2="599.64" y2="187.25" stroke="#fff" stroke-width="2.4"/><line x1="607.0" y1="183.0" x2="607.00" y2="191.50" stroke="#fff" stroke-width="2.4"/><line x1="607.0" y1="183.0" x2="614.36" y2="187.25" stroke="#fff" stroke-width="2.4"/><line x1="607.0" y1="183.0" x2="614.36" y2="178.75" stroke="#fff" stroke-width="2.4"/><circle cx="607.0" cy="183.0" r="4.6" fill="#fff"/><circle cx="607.0" cy="183.0" r="2" fill="#c9a400"/><rect x="633.5" y="151" width="2" height="38" fill="#d0d0d0"/><rect x="635.5" y="151" width="1.5" height="38" fill="#fff"/><rect x="664" y="151" width="20" height="13" fill="#eeeeee" stroke="#8a8a8a" stroke-width="2"/><rect x="655" y="158.5" width="38" height="21" rx="5" fill="#6c99c9" stroke="#3f5f82" stroke-width="2"/><rect x="657" y="160.5" width="34" height="6" rx="3" fill="#92b6dc"/><rect x="662" y="170" width="24" height="5" fill="#555"/><rect x="664" y="174" width="20" height="15" fill="#fff" stroke="#8a8a8a" stroke-width="2"/><path d="M668,178.5 H680 M668,182.5 H680 M668,186 H680" stroke="#999" stroke-width="1.6"/><path d="M719,147 H739 L749,157 V189 H719 Z" fill="#fff" stroke="#909090" stroke-width="2.2" stroke-linejoin="miter"/><path d="M739,147 L749,157" stroke="#909090" stroke-width="2.2"/><path d="M739,148 V157 H748 Z" fill="#e8e8e8" stroke="#909090" stroke-width="2.2" stroke-linejoin="miter"/><rect x="721" y="161" width="26" height="20" fill="#4aa6e6" stroke="#4f6d88" stroke-width="1.8"/><path d="M722,175 L729,167 L746,172 V180 H722 Z" fill="#c0ad5a"/><rect x="742" y="172" width="22" height="22" rx="4" fill="#3e5a70"/><rect x="743.5" y="173.5" width="19" height="9.9" rx="3" fill="#7890a2"/><path d="M753,178 H747 V189 H753" fill="none" stroke="#fff" stroke-width="3"/><path d="M750,183.5 H760 M756,179.5 L760.5,183.5 L756,187.5" fill="none" stroke="#fff" stroke-width="2.2"/><path d="M785,147 H805 L815,157 V189 H785 Z" fill="#fff" stroke="#909090" stroke-width="2.2" stroke-linejoin="miter"/><path d="M805,147 L815,157" stroke="#909090" stroke-width="2.2"/><path d="M805,148 V157 H814 Z" fill="#e8e8e8" stroke="#909090" stroke-width="2.2" stroke-linejoin="miter"/><g transform="translate(800 171) rotate(-90)"><path d="M1.5,0 C4,-3.2 10,-3.6 11,0 C10,3.6 4,3.2 1.5,0 Z" fill="#ff9a00"/></g><g transform="translate(800 171) rotate(-30)"><path d="M1.5,0 C4,-3.2 10,-3.6 11,0 C10,3.6 4,3.2 1.5,0 Z" fill="#ff9a00"/></g><g transform="translate(800 171) rotate(30)"><path d="M1.5,0 C4,-3.2 10,-3.6 11,0 C10,3.6 4,3.2 1.5,0 Z" fill="#ff9a00"/></g><g transform="translate(800 171) rotate(90)"><path d="M1.5,0 C4,-3.2 10,-3.6 11,0 C10,3.6 4,3.2 1.5,0 Z" fill="#ff9a00"/></g><g transform="translate(800 171) rotate(150)"><path d="M1.5,0 C4,-3.2 10,-3.6 11,0 C10,3.6 4,3.2 1.5,0 Z" fill="#ff9a00"/></g><g transform="translate(800 171) rotate(210)"><path d="M1.5,0 C4,-3.2 10,-3.6 11,0 C10,3.6 4,3.2 1.5,0 Z" fill="#ff9a00"/></g><circle cx="800" cy="171" r="2.6" fill="#ff9a00"/><rect x="808" y="172" width="22" height="22" rx="4" fill="#3e5a70"/><rect x="809.5" y="173.5" width="19" height="9.9" rx="3" fill="#7890a2"/><path d="M819,178 H813 V189 H819" fill="none" stroke="#fff" stroke-width="3"/><path d="M816,183.5 H826 M822,179.5 L826.5,183.5 L822,187.5" fill="none" stroke="#fff" stroke-width="2.2"/><path d="M851,147 H871 L881,157 V189 H851 Z" fill="#fff" stroke="#909090" stroke-width="2.2" stroke-linejoin="miter"/><path d="M871,147 L881,157" stroke="#909090" stroke-width="2.2"/><path d="M871,148 V157 H880 Z" fill="#e8e8e8" stroke="#909090" stroke-width="2.2" stroke-linejoin="miter"/><path d="M866,168 C862,160 864,155 866,156 C869,157 867,165 864,172 C861,178 856,183 853,184 C851,185 852,181 857,178 C863,175 872,173 878,175" fill="none" stroke="#e0261c" stroke-width="1.8" stroke-linecap="round"/><rect x="874" y="172" width="22" height="22" rx="4" fill="#3e5a70"/><rect x="875.5" y="173.5" width="19" height="9.9" rx="3" fill="#7890a2"/><path d="M885,178 H879 V189 H885" fill="none" stroke="#fff" stroke-width="3"/><path d="M882,183.5 H892 M888,179.5 L892.5,183.5 L888,187.5" fill="none" stroke="#fff" stroke-width="2.2"/><path d="M921,167 L933,153 V161 H942 C956,161 958,187 942,187 H938 L937,182 H941 C950,182 950,168 941,168 H933 V176 Z" fill="#e3813c" stroke="#c86a28" stroke-width="1.5" stroke-linejoin="round"/><path d="M1021,167 L1009,153 V161 H1000 C986,161 984,187 1000,187 H1004 L1005,182 H1001 C992,182 992,168 1001,168 H1009 V176 Z" fill="#d8dada" stroke="#cdd0d0" stroke-width="1.5" stroke-linejoin="round"/><rect x="1055" y="155" width="2.4" height="2.4" fill="#cdcdcd"/><rect x="1061" y="155" width="2.4" height="2.4" fill="#cdcdcd"/><rect x="1055" y="161" width="2.4" height="2.4" fill="#cdcdcd"/><rect x="1061" y="161" width="2.4" height="2.4" fill="#cdcdcd"/><rect x="1055" y="167" width="2.4" height="2.4" fill="#cdcdcd"/><rect x="1061" y="167" width="2.4" height="2.4" fill="#cdcdcd"/><rect x="1055" y="173" width="2.4" height="2.4" fill="#cdcdcd"/><rect x="1061" y="173" width="2.4" height="2.4" fill="#cdcdcd"/><rect x="1055" y="179" width="2.4" height="2.4" fill="#cdcdcd"/><rect x="1061" y="179" width="2.4" height="2.4" fill="#cdcdcd"/><rect x="1055" y="185" width="2.4" height="2.4" fill="#cdcdcd"/><rect x="1061" y="185" width="2.4" height="2.4" fill="#cdcdcd"/><rect x="1079" y="152" width="46" height="35" rx="7" fill="#e6e6e6" stroke="#c9c9c9" stroke-width="2"/><polygon points="1085.2,161.4 1096.4,159.6 1095.6,163.7 1092.4,168.3 1090.0,168.3 1086.0,165.4" fill="#bdbdbd"/><polygon points="1092.0,170.1 1095.6,171.2 1094.4,178.2 1092.8,180.5 1091.6,173.0" fill="#bdbdbd"/><polygon points="1100.0,160.8 1104.4,159.9 1104.0,164.0 1100.4,164.0" fill="#bdbdbd"/><polygon points="1099.6,165.4 1105.2,165.4 1106.4,170.9 1103.2,178.2 1101.2,173.0" fill="#bdbdbd"/><polygon points="1104.8,159.6 1119.2,159.9 1118.0,167.2 1112.4,169.5 1107.2,165.4" fill="#bdbdbd"/><polygon points="1113.6,174.1 1118.8,174.1 1118.0,178.2 1114.0,177.6" fill="#bdbdbd"/><path d="M1095.3,155 V184 M1108.7,155 V184 M1082,166.6 H1122 M1082,175.9 H1122" stroke="#f4f4f4" stroke-width="1.4"/><rect x="1149" y="149" width="5.5" height="41.5" fill="#d3d6d9" stroke="#c2c5c8" stroke-width="1"/><path d="M1155,170 L1174,150.5 V163.5 H1187 V176.5 H1174 V189.5 Z" fill="#d3d6d9" stroke="#c2c5c8" stroke-width="1.2"/><path d="M1218,170 L1237.5,150.5 V163.5 H1250.5 V176.5 H1237.5 V189.5 Z" fill="#d3d6d9" stroke="#c2c5c8" stroke-width="1.2"/><rect x="1269" y="141" width="166" height="58" rx="5" fill="#f6f6f6" stroke="#b0b0b0" stroke-width="2"/><rect x="1271" y="143" width="123" height="54" fill="#fff"/><rect x="1393.5" y="142" width="1.5" height="56" fill="#c8c8c8"/><path d="M1270,142 H1394" stroke="#a0a0a0" stroke-width="2.5"/><path d="M1405.5,166.25 H1420.5 L1413,173.75 Z" fill="#a8a8a8"/><text x="1275" y="179" font-size="27" fill="#b4b4b4">1</text><path d="M1487,170 L1467.5,150.5 V163.5 H1454.5 V176.5 H1467.5 V189.5 Z" fill="#d3d6d9" stroke="#c2c5c8" stroke-width="1.2"/><path d="M1549,170 L1529.5,150.5 V163.5 H1516.5 V176.5 H1529.5 V189.5 Z" fill="#d3d6d9" stroke="#c2c5c8" stroke-width="1.2"/><rect x="1549.5" y="149" width="5.5" height="41.5" fill="#d3d6d9" stroke="#c2c5c8" stroke-width="1"/><rect x="1592" y="151" width="20" height="13" fill="#f0f0f0" stroke="#d0d0d0" stroke-width="2"/><rect x="1583" y="158.5" width="38" height="21" rx="5" fill="#d5d8dc" stroke="#c8cbce" stroke-width="2"/><rect x="1592" y="174" width="20" height="15" fill="#f4f4f4" stroke="#d0d0d0" stroke-width="2"/><path d="M1596,178.5 H1608 M1596,182.5 H1608 M1596,186 H1608" stroke="#d8d8d8" stroke-width="1.6"/><path d="M1646,147 H1666 L1676,157 V189 H1646 Z" fill="#f8f8f8" stroke="#d8d8d8" stroke-width="2.2" stroke-linejoin="miter"/><path d="M1666,147 L1676,157" stroke="#d8d8d8" stroke-width="2.2"/><path d="M1666,148 V157 H1675 Z" fill="#e8e8e8" stroke="#d8d8d8" stroke-width="2.2" stroke-linejoin="miter"/><rect x="1648" y="161" width="26" height="20" fill="#dde3e8" stroke="#d0d6da" stroke-width="1.5"/><path d="M1649,175 L1656,167 L1673,172 V180 H1649 Z" fill="#dedbcc"/><rect x="1670" y="172" width="22" height="22" rx="4" fill="#c8cacc"/><path d="M1681,178 H1675 V189 H1681 M1678,183.5 H1688 M1684,179.5 L1688.5,183.5 L1684,187.5" fill="none" stroke="#fff" stroke-width="2.4"/><path d="M1705.0,166.5 H1719.0 L1712,173.5 Z" fill="#444"/><rect x="1735" y="151" width="44" height="35" rx="6" fill="#a9c5e6" stroke="#6f94c4" stroke-width="2"/><polygon points="1741.0,160.4 1751.7,158.6 1750.9,162.7 1747.9,167.3 1745.6,167.3 1741.8,164.4" fill="#4f6f96"/><polygon points="1747.5,169.1 1750.9,170.2 1749.8,177.2 1748.3,179.5 1747.1,172.0" fill="#4f6f96"/><polygon points="1755.1,159.8 1759.3,158.9 1758.9,163.0 1755.5,163.0" fill="#4f6f96"/><polygon points="1754.7,164.4 1760.0,164.4 1761.2,169.9 1758.1,177.2 1756.2,172.0" fill="#4f6f96"/><polygon points="1759.7,158.6 1773.3,158.9 1772.2,166.2 1766.9,168.5 1761.9,164.4" fill="#4f6f96"/><polygon points="1768.0,173.1 1773.0,173.1 1772.2,177.2 1768.4,176.6" fill="#4f6f96"/><path d="M1750.7,154 V183 M1763.3,154 V183 M1738,165.6 H1776 M1738,174.9 H1776" stroke="#d8e6f4" stroke-width="1.4"/><g transform="translate(1757 165) rotate(50.2)"><line x1="5" y1="0" x2="31.2" y2="0" stroke="#222" stroke-width="7.5" stroke-linecap="round"/><line x1="5" y1="0" x2="31.2" y2="0" stroke="#e6c872" stroke-width="4.6" stroke-linecap="round"/><line x1="14.1" y1="-2.3" x2="14.1" y2="2.3" stroke="#333" stroke-width="1.5"/><circle cx="29.7" cy="0" r="1.6" fill="#333"/><path d="M-7.87,3.2 L-1.5,3.2 L-1.5,-3.2 L-7.87,-3.2 A8.5,8.5 0 1 1 -7.87,3.2 Z" fill="#ececec" stroke="#222" stroke-width="2"/><line x1="6" y1="0" x2="12" y2="0" stroke="#222" stroke-width="7.5"/><line x1="5" y1="0" x2="12" y2="0" stroke="#d8d8d8" stroke-width="4.6"/></g><rect x="122" y="233" width="2.4" height="2.4" fill="#cdcdcd"/><rect x="128" y="233" width="2.4" height="2.4" fill="#cdcdcd"/><rect x="122" y="239" width="2.4" height="2.4" fill="#cdcdcd"/><rect x="128" y="239" width="2.4" height="2.4" fill="#cdcdcd"/><rect x="122" y="245" width="2.4" height="2.4" fill="#cdcdcd"/><rect x="128" y="245" width="2.4" height="2.4" fill="#cdcdcd"/><rect x="122" y="251" width="2.4" height="2.4" fill="#cdcdcd"/><rect x="128" y="251" width="2.4" height="2.4" fill="#cdcdcd"/><rect x="122" y="257" width="2.4" height="2.4" fill="#cdcdcd"/><rect x="128" y="257" width="2.4" height="2.4" fill="#cdcdcd"/><rect x="122" y="263" width="2.4" height="2.4" fill="#cdcdcd"/><rect x="128" y="263" width="2.4" height="2.4" fill="#cdcdcd"/><line x1="150.5" y1="267.0" x2="164" y2="253.5" stroke="#2a2a2a" stroke-width="6.5" stroke-linecap="round"/><line x1="151" y1="266.5" x2="160" y2="257.5" stroke="#f4c430" stroke-width="3.4"/><circle cx="162" cy="255.5" r="2.2" fill="#111"/><circle cx="175" cy="242.5" r="16.5" fill="#e9e9e9" stroke="#666" stroke-width="2.2"/><path d="M164,238.5 A12,12 0 0 1 177,230.5" stroke="#fff" stroke-width="3" fill="none" opacity="0.9"/><rect x="162" y="240" width="26" height="5.5" rx="2.5" fill="#6a98cc" stroke="#4a70a0" stroke-width="1"/><rect x="172.2" y="229.5" width="5.5" height="26" rx="2.5" fill="#6a98cc" stroke="#4a70a0" stroke-width="1"/><line x1="216.5" y1="267.0" x2="230" y2="253.5" stroke="#2a2a2a" stroke-width="6.5" stroke-linecap="round"/><line x1="217" y1="266.5" x2="226" y2="257.5" stroke="#f4c430" stroke-width="3.4"/><circle cx="228" cy="255.5" r="2.2" fill="#111"/><circle cx="241" cy="242.5" r="16.5" fill="#e9e9e9" stroke="#666" stroke-width="2.2"/><path d="M230,238.5 A12,12 0 0 1 243,230.5" stroke="#fff" stroke-width="3" fill="none" opacity="0.9"/><rect x="230" y="240" width="22" height="5.5" rx="2.5" fill="#6a98cc" stroke="#4a70a0" stroke-width="1"/><rect x="283" y="229" width="24" height="27" fill="#eeeeee" stroke="#999" stroke-width="2"/><line x1="282.5" y1="267.0" x2="296" y2="253.5" stroke="#2a2a2a" stroke-width="6.5" stroke-linecap="round"/><line x1="283" y1="266.5" x2="292" y2="257.5" stroke="#f4c430" stroke-width="3.4"/><circle cx="294" cy="255.5" r="2.2" fill="#111"/><circle cx="307" cy="242.5" r="16.5" fill="#e9e9e9" stroke="#666" stroke-width="2.2"/><path d="M296,238.5 A12,12 0 0 1 309,230.5" stroke="#fff" stroke-width="3" fill="none" opacity="0.9"/><text x="295" y="251" font-size="19" font-weight="bold" fill="#222" letter-spacing="-1">1:1</text><line x1="348.5" y1="267.0" x2="362" y2="253.5" stroke="#2a2a2a" stroke-width="6.5" stroke-linecap="round"/><line x1="349" y1="266.5" x2="358" y2="257.5" stroke="#f4c430" stroke-width="3.4"/><circle cx="360" cy="255.5" r="2.2" fill="#111"/><circle cx="373" cy="242.5" r="16" fill="#e9e9e9" stroke="#666" stroke-width="2.2"/><path d="M362,238.5 A12,12 0 0 1 375,230.5" stroke="#fff" stroke-width="3" fill="none" opacity="0.9"/><path d="M351,224 H366 L361,229 L367,235 L362,240 L356,234 L351,239 Z" fill="#6a98cc" stroke="#3f5f82" stroke-width="1.5"/><path d="M392,224 H377 L382,229 L376,235 L381,240 L387,234 L392,239 Z" fill="#6a98cc" stroke="#3f5f82" stroke-width="1.5"/><path d="M392,265 H377 L382,260 L376,254 L381,249 L387,255 L392,250 Z" fill="#6a98cc" stroke="#3f5f82" stroke-width="1.5"/><path d="M414.3,246.5 C413.5,232 422,226 430,226 C437,226 443,230 448.3,233.8 L453.7,227.2 V246.8 H437 L442.6,240.6 C437,237 433,235 429,235 C424,235 421.5,239 421.2,243.5 Z" fill="#6d9cd6" stroke="#2f63b0" stroke-width="1.3" stroke-linejoin="miter"/><path d="M414.3,246.5 C413.5,232 422,226 430,226 C437,226 443,230 448.3,233.8 L453.7,227.2 V246.8 H437 L442.6,240.6 C437,237 433,235 429,235 C424,235 421.5,239 421.2,243.5 Z" fill="#4a82c8" stroke="#2f63b0" stroke-width="1.3" transform="rotate(180 434 248)"/><path d="M417,240 C418,231 424,228.5 430,228.5 C437,228.5 442,231 446,234" fill="none" stroke="#a9c7ec" stroke-width="2"/><rect x="485" y="233" width="2.4" height="2.4" fill="#cdcdcd"/><rect x="491" y="233" width="2.4" height="2.4" fill="#cdcdcd"/><rect x="485" y="239" width="2.4" height="2.4" fill="#cdcdcd"/><rect x="491" y="239" width="2.4" height="2.4" fill="#cdcdcd"/><rect x="485" y="245" width="2.4" height="2.4" fill="#cdcdcd"/><rect x="491" y="245" width="2.4" height="2.4" fill="#cdcdcd"/><rect x="485" y="251" width="2.4" height="2.4" fill="#cdcdcd"/><rect x="491" y="251" width="2.4" height="2.4" fill="#cdcdcd"/><rect x="485" y="257" width="2.4" height="2.4" fill="#cdcdcd"/><rect x="491" y="257" width="2.4" height="2.4" fill="#cdcdcd"/><rect x="485" y="263" width="2.4" height="2.4" fill="#cdcdcd"/><rect x="491" y="263" width="2.4" height="2.4" fill="#cdcdcd"/><rect x="513" y="231" width="24" height="22" fill="#c8e4f8" stroke="#4a6a88" stroke-width="2.2"/><path d="M529,251 V243 C529,230 549,230 549,243 V251" fill="none" stroke="#8a8a8a" stroke-width="5"/><path d="M529,251 V243 C529,230 549,230 549,243 V251" fill="none" stroke="#e8e8e8" stroke-width="2"/><rect x="525" y="250.5" width="28" height="19" rx="3" fill="#f0dc20" stroke="#c9a000" stroke-width="2"/><rect x="579" y="237" width="24" height="22" fill="#c8e4f8" stroke="#4a6a88" stroke-width="2.2"/><circle cx="603" cy="239.5" r="12" fill="#c8e4f8" stroke="#4a6a88" stroke-width="2.2"/><path d="M611,251 V243 C611,233 597,231 594,240" fill="none" stroke="#8a8a8a" stroke-width="5"/><path d="M611,251 V243 C611,233 597,231 594,240" fill="none" stroke="#e8e8e8" stroke-width="2"/><rect x="591" y="250.5" width="28" height="19" rx="3" fill="#f0dc20" stroke="#c9a000" stroke-width="2"/><rect x="649" y="245" width="24.5" height="18" fill="#c8e4f8" stroke="#4a6a88" stroke-width="2.2"/><circle cx="669" cy="242.5" r="12.3" fill="#c8e4f8" stroke="#4a6a88" stroke-width="2.2"/><rect x="644" y="228" width="4.2" height="4.2" fill="#000"/><rect x="680" y="228" width="4.2" height="4.2" fill="#000"/><rect x="644" y="264" width="4.2" height="4.2" fill="#000"/><rect x="680" y="264" width="4.2" height="4.2" fill="#000"/><rect x="715.5" y="245" width="24" height="18" fill="#f4f0a0" stroke="#909090" stroke-width="2.2"/><circle cx="735" cy="242.5" r="12.3" fill="#c8e4f8" stroke="#4a6a88" stroke-width="2.2"/><rect x="720" y="228" width="4.2" height="4.2" fill="#000"/><rect x="746" y="228" width="4.2" height="4.2" fill="#000"/><rect x="710" y="240" width="4.2" height="4.2" fill="#000"/><rect x="720" y="254" width="4.2" height="4.2" fill="#000"/><rect x="746" y="254" width="4.2" height="4.2" fill="#000"/><rect x="710" y="264" width="4.2" height="4.2" fill="#000"/><rect x="740" y="264" width="4.2" height="4.2" fill="#000"/><rect x="777" y="245" width="30.5" height="22.5" fill="#c8e6fa" stroke="#7aa0b8" stroke-width="2"/><rect x="785" y="229" width="30.5" height="22.5" fill="#f4f0a0" stroke="#909090" stroke-width="2"/><path d="M812.0,266.8 H824.0 L818,272.8 Z" fill="#555"/><rect x="845" y="229" width="18.5" height="16.5" fill="#c8f8c8" stroke="#88c088" stroke-width="2"/><rect x="845" y="249" width="26.5" height="18.5" fill="#c8e6fa" stroke="#7aa0b8" stroke-width="2"/><rect x="842" y="226" width="2.2" height="44" fill="#333"/><path d="M878.0,266.8 H890.0 L884,272.8 Z" fill="#555"/><rect x="907" y="239" width="9" height="20.5" fill="#c8f8c8" stroke="#88c088" stroke-width="2"/><rect x="925" y="239" width="12.5" height="28.5" fill="#c8e6fa" stroke="#7aa0b8" stroke-width="2"/><rect x="943" y="239" width="9" height="16.5" fill="#c8f8c8" stroke="#88c088" stroke-width="2"/><rect x="906" y="228" width="2" height="16" fill="#333"/><rect x="924" y="228" width="2" height="16" fill="#333"/><rect x="942" y="228" width="2" height="16" fill="#333"/><path d="M944.0,266.8 H956.0 L950,272.8 Z" fill="#555"/><rect x="975" y="229" width="22" height="38.5" fill="#c8e6fa" stroke="#7aa0b8" stroke-width="2"/><rect x="1003" y="229" width="10.5" height="38.5" fill="#f4f0a0" stroke="#909090" stroke-width="2"/><path d="M974,247.5 H984 M979,242 L984.5,247.5 L979,253 M997.5,247.5 H988.5 M994,242 L988.5,247.5 L994,253" fill="none" stroke="#333" stroke-width="1.8"/><path d="M1010.0,266.8 H1022.0 L1016,272.8 Z" fill="#555"/>
<rect x="138.5" y="298" width="2.4" height="2.4" fill="#c4c4c4"/><rect x="138.5" y="304" width="2.4" height="2.4" fill="#c4c4c4"/><rect x="144.5" y="298" width="2.4" height="2.4" fill="#c4c4c4"/><rect x="144.5" y="304" width="2.4" height="2.4" fill="#c4c4c4"/><rect x="150.5" y="298" width="2.4" height="2.4" fill="#c4c4c4"/><rect x="150.5" y="304" width="2.4" height="2.4" fill="#c4c4c4"/><rect x="156.5" y="298" width="2.4" height="2.4" fill="#c4c4c4"/><rect x="156.5" y="304" width="2.4" height="2.4" fill="#c4c4c4"/><rect x="162.5" y="298" width="2.4" height="2.4" fill="#c4c4c4"/><rect x="162.5" y="304" width="2.4" height="2.4" fill="#c4c4c4"/><rect x="168.5" y="298" width="2.4" height="2.4" fill="#c4c4c4"/><rect x="168.5" y="304" width="2.4" height="2.4" fill="#c4c4c4"/><path d="M150,365 C146,358 140,350 137,345 C134,341 138,338 141,341 L147,347 V326 C147,322 152,322 152,326 V343 V323 C152,319 157,319 157,323 V343 V325 C157,321 162,321 162,325 V344 V329 C162,325 167,325 167,329 V350 C167,356 165,360 163,365 Z" fill="#fff" stroke="#111" stroke-width="2.2" stroke-linejoin="round"/><path d="M152,330 V343 M157,330 V343 M162,332 V344" stroke="#111" stroke-width="1.6"/><rect x="130" y="387" width="20" height="27" fill="none" stroke="#111" stroke-width="2.2" stroke-dasharray="4,3"/><line x1="134.0" y1="426.0" x2="147.5" y2="412.5" stroke="#2a2a2a" stroke-width="6.5" stroke-linecap="round"/><line x1="134.5" y1="425.5" x2="143.5" y2="416.5" stroke="#f4c430" stroke-width="3.4"/><circle cx="145.5" cy="414.5" r="2.2" fill="#111"/><circle cx="158.5" cy="401.5" r="16.5" fill="#e9e9e9" stroke="#666" stroke-width="2.2"/><path d="M147.5,397.5 A12,12 0 0 1 160.5,389.5" stroke="#fff" stroke-width="3" fill="none" opacity="0.9"/><path d="M165,390 V396 M165,400 V406 M150,413 H156 M160,413 H166" stroke="#bbb" stroke-width="2"/><rect x="134" y="454" width="32" height="32" fill="none" stroke="#555" stroke-width="1.6" stroke-dasharray="2,4"/><rect x="131" y="451" width="6" height="6" fill="#fff" stroke="#666" stroke-width="1.6"/><rect x="163" y="451" width="6" height="6" fill="#fff" stroke="#666" stroke-width="1.6"/><rect x="131" y="483" width="6" height="6" fill="#fff" stroke="#666" stroke-width="1.6"/><rect x="163" y="483" width="6" height="6" fill="#fff" stroke="#666" stroke-width="1.6"/><path d="M139,453 V485 L146,478 L152,492 L157,489 L151,476 L167,476 Z" fill="#fff" stroke="#000" stroke-width="2.2" stroke-linejoin="round"/><rect x="121" y="507" width="62" height="60" rx="6" fill="#dedede" stroke="#bcbcbc" stroke-width="2"/><rect x="140" y="516" width="32" height="40" fill="#ececec" stroke="#9a9a9a" stroke-width="2"/><path d="M133,520 C133,513 141,513 141,520 V550 C139,547 133,548 133,552 Z" fill="#dedede" stroke="#9a9a9a" stroke-width="2" stroke-linejoin="round"/><path d="M133,552 C133,556 137,556 141,556" fill="none" stroke="#9a9a9a" stroke-width="2"/><path d="M158,519 L168,529 H162 V537 H154 V529 H148 Z" fill="#6c99c9" stroke="#3f5f82" stroke-width="1.5"/><path d="M141,540 L147,534 V538 H153 V543 H147 V547 Z M169,537 V545 M157,550 V556" fill="#6c99c9" stroke="#3f5f82" stroke-width="1.5"/><path d="M145,582 L169,594 M145,582 L135,616" stroke="#111" stroke-width="2.2"/><path d="M135,616 L155,605" stroke="#111" stroke-width="2.2" stroke-dasharray="3,2"/><line x1="159" y1="602" x2="172" y2="618" stroke="#8a5a08" stroke-width="7"/><line x1="159" y1="602" x2="172" y2="618" stroke="#c8860f" stroke-width="4.5"/><line x1="151" y1="619" x2="166" y2="598" stroke="#9a8a10" stroke-width="7" stroke-linecap="round"/><line x1="151" y1="619" x2="166" y2="598" stroke="#f5d83a" stroke-width="4.5" stroke-linecap="round"/><ellipse cx="160" cy="600" rx="9" ry="4" transform="rotate(-35 160 600)" fill="#cfcfcf" stroke="#666" stroke-width="1.5"/><circle cx="145" cy="582" r="4.8" fill="#2f80ee" stroke="#1a5fc0" stroke-width="1"/><circle cx="169" cy="594" r="4.8" fill="#2f80ee" stroke="#1a5fc0" stroke-width="1"/><circle cx="135" cy="616" r="4.8" fill="#2f80ee" stroke="#1a5fc0" stroke-width="1"/><path d="M131,676 L140,654 L170,649 L171,676 L150,678 Z" fill="#dcdcdc" stroke="#bdbdbd" stroke-width="1.8"/><path d="M138,665 L170,660 M136,671 L165,668 M150,651 L146,677 M160,650 L157,677" stroke="#c4c4c4" stroke-width="1"/><rect x="158" y="670" width="18" height="18" rx="3.5" fill="#5b8f5b"/><rect x="159.2" y="671.2" width="15.6" height="7.56" rx="2.5" fill="#8db58d"/><rect x="164.8" y="673" width="4.4" height="12" rx="1" fill="#fff"/><rect x="161" y="676.8" width="12" height="4.4" rx="1" fill="#fff"/><rect x="121" y="699" width="62" height="60" rx="6" fill="#f7f7f7" stroke="#c2c2c2" stroke-width="2"/><rect x="140" y="708" width="32" height="40" fill="#e6e6e6" stroke="#9a9a9a" stroke-width="2"/><path d="M133,712 C133,705 141,705 141,712 V742 C139,739 133,740 133,744 Z" fill="#dedede" stroke="#9a9a9a" stroke-width="2" stroke-linejoin="round"/><path d="M133,744 C133,748 137,748 141,748" fill="none" stroke="#9a9a9a" stroke-width="2"/><rect x="158" y="734" width="18" height="18" rx="3.5" fill="#5b8f5b"/><rect x="159.2" y="735.2" width="15.6" height="7.56" rx="2.5" fill="#8db58d"/><rect x="164.8" y="737" width="4.4" height="12" rx="1" fill="#fff"/><rect x="161" y="740.8" width="12" height="4.4" rx="1" fill="#fff"/><rect x="133" y="779" width="38" height="26" fill="#49a7ea" stroke="#8a8a8a" stroke-width="2.2"/><path d="M134,794 L144,786 L170,796 V804 H134 Z" fill="#c9b45e"/><rect x="158" y="798" width="18" height="18" rx="3.5" fill="#5b8f5b"/><rect x="159.2" y="799.2" width="15.6" height="7.56" rx="2.5" fill="#8db58d"/><rect x="164.8" y="801" width="4.4" height="12" rx="1" fill="#fff"/><rect x="161" y="804.8" width="12" height="4.4" rx="1" fill="#fff"/><rect x="133" y="843" width="38" height="26" fill="none" stroke="#999" stroke-width="2.2"/><path d="M144,849 H160 M144,849 V852 M160,849 V852 M152,849 V863 M149,863 H155" stroke="#333" stroke-width="2"/><rect x="158" y="862" width="18" height="18" rx="3.5" fill="#5b8f5b"/><rect x="159.2" y="863.2" width="15.6" height="7.56" rx="2.5" fill="#8db58d"/><rect x="164.8" y="865" width="4.4" height="12" rx="1" fill="#fff"/><rect x="161" y="868.8" width="12" height="4.4" rx="1" fill="#fff"/><rect x="134.5" y="902" width="9" height="9" fill="#ffd800" stroke="#ff9a00" stroke-width="1.8"/><rect x="134.5" y="914" width="9" height="9" fill="#ff4a00" stroke="#c02a00" stroke-width="1.8"/><rect x="134.5" y="926" width="9" height="9" fill="#10b050" stroke="#0a4020" stroke-width="1.8"/><rect x="146" y="905" width="12" height="4" fill="#999"/><rect x="146" y="918" width="18" height="4" fill="#999"/><rect x="146" y="930" width="8" height="4" fill="#999"/><rect x="158" y="926" width="18" height="18" rx="3.5" fill="#5b8f5b"/><rect x="159.2" y="927.2" width="15.6" height="7.56" rx="2.5" fill="#8db58d"/><rect x="164.8" y="929" width="4.4" height="12" rx="1" fill="#fff"/><rect x="161" y="932.8" width="12" height="4.4" rx="1" fill="#fff"/><rect x="131" y="978" width="42" height="7" fill="#999" stroke="#333" stroke-width="1.6"/><rect x="142" y="979.5" width="8" height="4" fill="#fff"/><rect x="158" y="979.5" width="8" height="4" fill="#fff"/><rect x="158" y="990" width="18" height="18" rx="3.5" fill="#5b8f5b"/><rect x="159.2" y="991.2" width="15.6" height="7.56" rx="2.5" fill="#8db58d"/><rect x="164.8" y="993" width="4.4" height="12" rx="1" fill="#fff"/><rect x="161" y="996.8" width="12" height="4.4" rx="1" fill="#fff"/><path d="M152,1027 L137,1068 L152,1058 L167,1068 Z" fill="#6c99c9" stroke="#3f5f82" stroke-width="1.6" stroke-linejoin="round"/><text x="146" y="1053" font-size="14" font-weight="bold" fill="#fff">N</text><rect x="156" y="1052" width="20" height="19" rx="3.5" fill="#5b8f5b"/><rect x="157.2" y="1053.2" width="17.6" height="7.9799999999999995" rx="2.5" fill="#8db58d"/><rect x="163.8" y="1055" width="4.4" height="13" rx="1" fill="#fff"/><rect x="159" y="1059.3" width="14" height="4.4" rx="1" fill="#fff"/><rect x="133" y="1109.5" width="26.5" height="19.5" fill="#c8e4f8" stroke="#8aaac0" stroke-width="1.8"/><circle cx="159" cy="1112" r="11.5" fill="#f8b0b0" stroke="#d06060" stroke-width="1.8"/><path d="M148.7,1090.5 L137,1115 H162.5 Z" fill="#c8f8c0" stroke="#6a9a6a" stroke-width="1.8" stroke-linejoin="round"/><rect x="158" y="1118.5" width="18" height="18" rx="3.5" fill="#5b8f5b"/><rect x="159.2" y="1119.7" width="15.6" height="7.56" rx="2.5" fill="#8db58d"/><rect x="164.8" y="1121.5" width="4.4" height="12" rx="1" fill="#fff"/><rect x="161" y="1125.3" width="12" height="4.4" rx="1" fill="#fff"/><path d="M168,1131 H180 L174,1137 Z" fill="#222"/><polygon points="152.0,1157.0 157.3,1169.7 171.0,1170.8 160.6,1179.8 163.8,1193.2 152.0,1186.0 140.2,1193.2 143.4,1179.8 133.0,1170.8 146.7,1169.7" fill="#fde8b0" stroke="#e09a52" stroke-width="1.8" stroke-linejoin="round"/><rect x="158" y="1182" width="18" height="18" rx="3.5" fill="#5b8f5b"/><rect x="159.2" y="1183.2" width="15.6" height="7.56" rx="2.5" fill="#8db58d"/><rect x="164.8" y="1185" width="4.4" height="12" rx="1" fill="#fff"/><rect x="161" y="1188.8" width="12" height="4.4" rx="1" fill="#fff"/><rect x="132" y="1254" width="6" height="6" fill="#333"/><line x1="135" y1="1257" x2="168" y2="1224" stroke="#333" stroke-width="2"/><path d="M171,1220.5 L158,1223.5 L167,1232.5 Z" fill="#eee" stroke="#333" stroke-width="2" stroke-linejoin="round"/><rect x="158" y="1246.5" width="18" height="18" rx="3.5" fill="#5b8f5b"/><rect x="159.2" y="1247.7" width="15.6" height="7.56" rx="2.5" fill="#8db58d"/><rect x="164.8" y="1249.5" width="4.4" height="12" rx="1" fill="#fff"/><rect x="161" y="1253.3" width="12" height="4.4" rx="1" fill="#fff"/><path d="M145,1286 L169,1298.5 M145,1286 L135,1320" stroke="#111" stroke-width="2.2"/><path d="M135,1320 L169,1298.5" stroke="#111" stroke-width="2.2" stroke-dasharray="3,2"/><circle cx="145" cy="1286" r="4.8" fill="#2f80ee" stroke="#1a5fc0" stroke-width="1"/><circle cx="169" cy="1298.5" r="4.8" fill="#2f80ee" stroke="#1a5fc0" stroke-width="1"/><circle cx="135" cy="1320" r="4.8" fill="#2f80ee" stroke="#1a5fc0" stroke-width="1"/><rect x="158" y="1311" width="18" height="18" rx="3.5" fill="#5b8f5b"/><rect x="159.2" y="1312.2" width="15.6" height="7.56" rx="2.5" fill="#8db58d"/><rect x="164.8" y="1314" width="4.4" height="12" rx="1" fill="#fff"/><rect x="161" y="1317.8" width="12" height="4.4" rx="1" fill="#fff"/><path d="M168,1323.5 H180 L174,1329.5 Z" fill="#222"/><rect x="133" y="1349" width="38" height="38" fill="#fff" stroke="#999" stroke-width="2.2"/><path d="M136,1354.5 H150 M136,1361 H150 M136,1367 H158 M136,1373.5 H150 M136,1380 H154" stroke="#6c99c9" stroke-width="3"/><path d="M150,1355 L145,1360 L150,1365 M152,1366 L157,1354 M159,1355 L164,1360 L159,1365" fill="none" stroke="#000" stroke-width="2"/><rect x="158" y="1374" width="18" height="18" rx="3.5" fill="#5b8f5b"/><rect x="159.2" y="1375.2" width="15.6" height="7.56" rx="2.5" fill="#8db58d"/><rect x="164.8" y="1377" width="4.4" height="12" rx="1" fill="#fff"/><rect x="161" y="1380.8" width="12" height="4.4" rx="1" fill="#fff"/><rect x="133" y="1413" width="38" height="38" fill="#e8e8e8" stroke="#6c99c9" stroke-width="2.2"/><rect x="134" y="1414" width="36" height="8" fill="#bcdcf0"/><path d="M138,1418 H145 M150,1418 H166 M138,1427 H145 M150,1427 H166 M138,1433 H145 M150,1433 H166 M138,1439 H145 M150,1439 H166 M138,1445 H145 M150,1445 H160" stroke="#6c99c9" stroke-width="2"/><rect x="156" y="1437" width="20" height="19" rx="3.5" fill="#5b8f5b"/><rect x="157.2" y="1438.2" width="17.6" height="7.9799999999999995" rx="2.5" fill="#8db58d"/><rect x="163.8" y="1440" width="4.4" height="13" rx="1" fill="#fff"/><rect x="159" y="1444.3" width="14" height="4.4" rx="1" fill="#fff"/><rect x="133" y="1477" width="38" height="38" fill="#e8e8e8" stroke="#6c99c9" stroke-width="2.2"/><rect x="134" y="1478" width="36" height="8" fill="#bcdcf0"/><path d="M138,1482 H150 M138,1491 H144 M138,1497 H144 M138,1503 H146 M158,1491 H166" stroke="#888" stroke-width="2"/><line x1="148" y1="1502" x2="165" y2="1478" stroke="#a05a00" stroke-width="7"/><line x1="148" y1="1502" x2="165" y2="1478" stroke="#f8c880" stroke-width="4"/><path d="M146.5,1504 L147,1494 L153,1498 Z" fill="#444"/><rect x="156" y="1501" width="20" height="19" rx="3.5" fill="#5b8f5b"/><rect x="157.2" y="1502.2" width="17.6" height="7.9799999999999995" rx="2.5" fill="#8db58d"/><rect x="163.8" y="1504" width="4.4" height="13" rx="1" fill="#fff"/><rect x="159" y="1508.3" width="14" height="4.4" rx="1" fill="#fff"/>
<path d="M3420.5,297 H3437.5 L3439,298.5 V315.5 L3437.5,317 H3420.5 L3419,315.5 V298.5 Z" fill="#f6f6f6" stroke="#5a5853" stroke-width="1.8"/><path d="M3448.5,297 H3465.5 L3467,298.5 V315.5 L3465.5,317 H3448.5 L3447,315.5 V298.5 Z" fill="#f6f6f6" stroke="#5a5853" stroke-width="1.8"/><path d="M3427,304.5 V301 H3435.5 V309.5 H3431" fill="none" stroke="#5a5853" stroke-width="1.7"/><rect x="3422.5" y="304.5" width="8.5" height="8.5" fill="none" stroke="#5a5853" stroke-width="1.7"/><path d="M3451.5,301.5 L3462.5,312.5 M3462.5,301.5 L3451.5,312.5" stroke="#5a5853" stroke-width="3.2"/><path d="M3420.5,583 H3437.5 L3439,584.5 V601.5 L3437.5,603 H3420.5 L3419,601.5 V584.5 Z" fill="#f6f6f6" stroke="#5a5853" stroke-width="1.8"/><path d="M3448.5,583 H3465.5 L3467,584.5 V601.5 L3465.5,603 H3448.5 L3447,601.5 V584.5 Z" fill="#f6f6f6" stroke="#5a5853" stroke-width="1.8"/><path d="M3427,590.5 V587 H3435.5 V595.5 H3431" fill="none" stroke="#5a5853" stroke-width="1.7"/><rect x="3422.5" y="590.5" width="8.5" height="8.5" fill="none" stroke="#5a5853" stroke-width="1.7"/><path d="M3451.5,587.5 L3462.5,598.5 M3462.5,587.5 L3451.5,598.5" stroke="#5a5853" stroke-width="3.2"/><path d="M3420.5,1017 H3437.5 L3439,1018.5 V1035.5 L3437.5,1037 H3420.5 L3419,1035.5 V1018.5 Z" fill="#f6f6f6" stroke="#5a5853" stroke-width="1.8"/><path d="M3448.5,1017 H3465.5 L3467,1018.5 V1035.5 L3465.5,1037 H3448.5 L3447,1035.5 V1018.5 Z" fill="#f6f6f6" stroke="#5a5853" stroke-width="1.8"/><path d="M3427,1024.5 V1021 H3435.5 V1029.5 H3431" fill="none" stroke="#5a5853" stroke-width="1.7"/><rect x="3422.5" y="1024.5" width="8.5" height="8.5" fill="none" stroke="#5a5853" stroke-width="1.7"/><path d="M3451.5,1021.5 L3462.5,1032.5 M3462.5,1021.5 L3451.5,1032.5" stroke="#5a5853" stroke-width="3.2"/><path d="M2588,349.5 C2594,341 2610,339 2618,351.5 C2610,359 2595,359 2588,349.5 Z" fill="#f4f4f4" stroke="#7a7a7a" stroke-width="1.3"/><defs><radialGradient id="iris" cx="0.4" cy="0.35" r="0.7"><stop offset="0" stop-color="#e8e8e8"/><stop offset="1" stop-color="#8a8a8a"/></radialGradient></defs><circle cx="2601.6" cy="348.6" r="7.2" fill="url(#iris)" stroke="#555" stroke-width="1.2"/><circle cx="2602" cy="347.5" r="3" fill="#0a0a0a"/><circle cx="2601" cy="346.4" r="1.1" fill="#fff"/><path d="M2587.5,341.8 C2596,338 2608,336.5 2616,342.8" fill="none" stroke="#7a7a7a" stroke-width="1.3"/><path d="M2651,350 V344 C2651,332.5 2665,332.5 2665,344 V350" fill="none" stroke="#7c7c76" stroke-width="6"/><path d="M2651,350 V344 C2651,332.5 2665,332.5 2665,344 V350" fill="none" stroke="#f2f2f2" stroke-width="2.6"/><rect x="2646" y="348" width="24" height="16" rx="3" fill="#6a6a6a"/><path d="M3328.0,1147.5 H3342.0 L3335,1154.5 Z" fill="#333"/><path d="M3328.0,1212.5 H3342.0 L3335,1219.5 Z" fill="#bbb"/><path d="M3400.0,1307.5 H3414.0 L3407,1314.5 Z" fill="#333"/><rect x="3143" y="1259" width="1.5" height="42" fill="#c8c8c8"/><path d="M3158,1267 L3164,1274 H3152 Z M3158,1293 L3164,1286 H3152 Z" fill="#333"/><rect x="3143" y="1323" width="1.5" height="42" fill="#c8c8c8"/><path d="M3158,1331 L3164,1338 H3152 Z M3158,1357 L3164,1350 H3152 Z" fill="#333"/><path d="M3386,1140 L3377,1151 L3386,1162 Z" fill="#95979a" stroke="#444" stroke-width="2" stroke-linejoin="round"/><rect x="3387" y="1137" width="24" height="30" fill="#fafafa" stroke="#7b7d78" stroke-width="2"/><line x1="3387" y1="1151" x2="3411" y2="1151" stroke="#7b7d78" stroke-width="2"/><line x1="3392" y1="1144" x2="3406" y2="1144" stroke="#4d4f52" stroke-width="3.6" stroke-linecap="round"/><line x1="3392" y1="1159" x2="3406" y2="1159" stroke="#4d4f52" stroke-width="1.8" stroke-linecap="round"/><path d="M3418,1161 h9 l-4.5,4 z" fill="#555"/><path d="M3386,1204 L3377,1215 L3386,1226 Z" fill="#95979a" stroke="#444" stroke-width="2" stroke-linejoin="round"/><rect x="3387" y="1201" width="24" height="30" fill="#fafafa" stroke="#7b7d78" stroke-width="2"/><line x1="3387" y1="1215" x2="3411" y2="1215" stroke="#7b7d78" stroke-width="2"/><line x1="3392" y1="1208" x2="3406" y2="1208" stroke="#4d4f52" stroke-width="3.6" stroke-linecap="round"/><line x1="3392" y1="1223" x2="3406" y2="1223" stroke="#4d4f52" stroke-width="1.8" stroke-linecap="round"/><path d="M3418,1225 h9 l-4.5,4 z" fill="#555"/><path d="M3202,1268 L3193,1279 L3202,1290 Z" fill="#95979a" stroke="#444" stroke-width="2" stroke-linejoin="round"/><rect x="3203" y="1265" width="24" height="30" fill="#fafafa" stroke="#7b7d78" stroke-width="2"/><line x1="3203" y1="1279" x2="3227" y2="1279" stroke="#7b7d78" stroke-width="2"/><line x1="3208" y1="1272" x2="3222" y2="1272" stroke="#4d4f52" stroke-width="3.6" stroke-linecap="round"/><line x1="3208" y1="1287" x2="3222" y2="1287" stroke="#4d4f52" stroke-width="1.8" stroke-linecap="round"/><path d="M3234,1289 h9 l-4.5,4 z" fill="#555"/><path d="M3202,1332 L3193,1343 L3202,1354 Z" fill="#95979a" stroke="#444" stroke-width="2" stroke-linejoin="round"/><rect x="3203" y="1329" width="24" height="30" fill="#fafafa" stroke="#7b7d78" stroke-width="2"/><line x1="3203" y1="1343" x2="3227" y2="1343" stroke="#7b7d78" stroke-width="2"/><line x1="3208" y1="1336" x2="3222" y2="1336" stroke="#4d4f52" stroke-width="3.6" stroke-linecap="round"/><line x1="3208" y1="1351" x2="3222" y2="1351" stroke="#4d4f52" stroke-width="1.8" stroke-linecap="round"/><path d="M3234,1353 h9 l-4.5,4 z" fill="#555"/><path d="M3002,1420 L2993,1431 L3002,1442 Z" fill="#95979a" stroke="#444" stroke-width="2" stroke-linejoin="round"/><rect x="3003" y="1417" width="24" height="30" fill="#fafafa" stroke="#7b7d78" stroke-width="2"/><line x1="3003" y1="1431" x2="3027" y2="1431" stroke="#7b7d78" stroke-width="2"/><line x1="3008" y1="1424" x2="3022" y2="1424" stroke="#4d4f52" stroke-width="3.6" stroke-linecap="round"/><line x1="3008" y1="1439" x2="3022" y2="1439" stroke="#4d4f52" stroke-width="1.8" stroke-linecap="round"/><path d="M3034,1441 h9 l-4.5,4 z" fill="#555"/><path d="M3270,1272 H3283 V1286 M3270,1352 H3283 V1338" fill="none" stroke="#555" stroke-width="3"/><path d="M3280,1312 C3280,1300 3296,1298 3297,1312" fill="none" stroke="#999" stroke-width="3"/><rect x="3274" y="1312" width="24" height="15" rx="3" fill="#555"/><path d="M3435.0,1488.5 H3449.0 L3442,1495.5 Z" fill="#333"/><rect x="3170" y="2092" width="1.5" height="43" fill="#c8c8c8"/><path d="M3182.0,2109.5 H3196.0 L3189,2116.5 Z" fill="#444"/><defs><linearGradient id="trk" x1="0" y1="0" x2="0" y2="1"><stop offset="0" stop-color="#d4d4d4"/><stop offset="1" stop-color="#e4e4e4"/></linearGradient><linearGradient id="hdl" x1="0" y1="0" x2="0" y2="1"><stop offset="0" stop-color="#ffffff"/><stop offset="1" stop-color="#f0f0f0"/></linearGradient></defs><rect x="3227" y="2109" width="194" height="8.5" rx="4" fill="url(#trk)" stroke="#a4a4a4" stroke-width="1.6"/><rect x="3227" y="2109" width="14" height="8.5" rx="3" fill="#5b9ded" stroke="#2f6fcc" stroke-width="1.6"/><rect x="3237" y="2101" width="24.5" height="24" rx="5" fill="url(#hdl)" stroke="#a8a8a8" stroke-width="1.6"/><rect x="3466" y="2118" width="2" height="2" fill="#bcbcbc"/><rect x="3460" y="2124" width="2" height="2" fill="#bcbcbc"/><rect x="3466" y="2124" width="2" height="2" fill="#bcbcbc"/><rect x="3454" y="2130" width="2" height="2" fill="#bcbcbc"/><rect x="3460" y="2130" width="2" height="2" fill="#bcbcbc"/><rect x="3466" y="2130" width="2" height="2" fill="#bcbcbc"/><rect x="3448" y="2136" width="2" height="2" fill="#bcbcbc"/><rect x="3454" y="2136" width="2" height="2" fill="#bcbcbc"/><rect x="3460" y="2136" width="2" height="2" fill="#bcbcbc"/><rect x="3012" y="944" width="2" height="2" fill="#aaa"/><rect x="3012" y="566" width="2" height="2" fill="#aaa"/><rect x="3018" y="944" width="2" height="2" fill="#aaa"/><rect x="3018" y="566" width="2" height="2" fill="#aaa"/><rect x="3024" y="944" width="2" height="2" fill="#aaa"/><rect x="3024" y="566" width="2" height="2" fill="#aaa"/><rect x="3030" y="944" width="2" height="2" fill="#aaa"/><rect x="3030" y="566" width="2" height="2" fill="#aaa"/><rect x="3036" y="944" width="2" height="2" fill="#aaa"/><rect x="3036" y="566" width="2" height="2" fill="#aaa"/><rect x="3042" y="944" width="2" height="2" fill="#aaa"/><rect x="3042" y="566" width="2" height="2" fill="#aaa"/><rect x="2574" y="1172" width="2" height="2" fill="#adadad"/><rect x="2574" y="1178" width="2" height="2" fill="#adadad"/><rect x="2574" y="1184" width="2" height="2" fill="#adadad"/><rect x="2574" y="1190" width="2" height="2" fill="#adadad"/><rect x="2574" y="1196" width="2" height="2" fill="#adadad"/><rect x="2574" y="1202" width="2" height="2" fill="#adadad"/>
</svg>
</div></body></html>
